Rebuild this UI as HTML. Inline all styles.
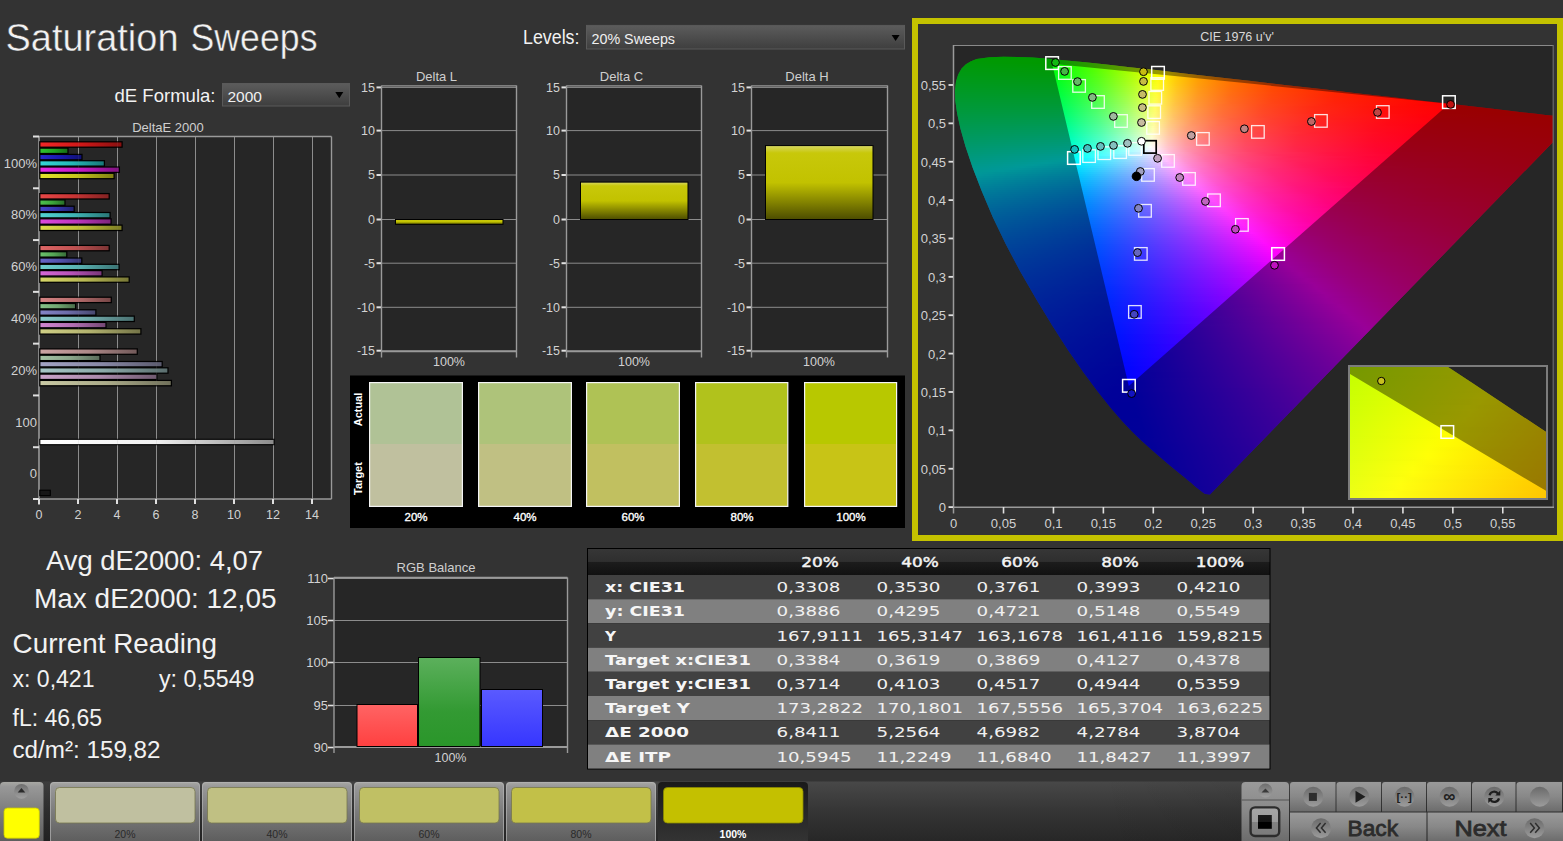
<!DOCTYPE html>
<html lang="en"><head><meta charset="utf-8"><title>Saturation Sweeps</title>
<style>
html,body{margin:0;padding:0}
body{width:1563px;height:841px;overflow:hidden;background:#333333;position:relative;font-family:"Liberation Sans",sans-serif}
.cie{position:absolute;overflow:hidden}
.cie i{display:block;height:2px}
svg{position:absolute;left:0;top:0}
svg text{font-family:"Liberation Sans",sans-serif}
svg text.dv{font-family:"DejaVu Sans","Liberation Sans",sans-serif}
</style></head>
<body>
<div style="position:absolute;left:912px;top:18px;width:639px;height:511px;border:6px solid #c4c200;background:#333"></div>
<div style="position:absolute;left:954px;top:46px;width:599px;height:461px;background:#262626"></div>
<div class="cie" style="left:954px;top:46px;width:599px;height:461px;clip-path:polygon(256.0px 448.4px,251.4px 448.1px,250.3px 447.4px,248.9px 446.5px,247.3px 445.3px,245.4px 443.7px,243.1px 441.9px,240.4px 439.7px,237.4px 437.1px,233.9px 434.2px,230.1px 431.0px,225.7px 427.5px,220.8px 423.4px,215.3px 418.9px,209.2px 413.8px,202.5px 408.1px,195.1px 401.6px,187.0px 394.2px,178.3px 385.7px,168.3px 375.2px,156.6px 361.7px,143.5px 345.2px,129.2px 326.1px,114.1px 304.2px,98.4px 279.7px,82.3px 253.2px,66.4px 225.8px,51.7px 198.1px,38.7px 170.9px,27.7px 145.1px,18.6px 121.5px,11.5px 100.5px,6.4px 82.5px,3.1px 67.3px,1.3px 54.7px,1.0px 44.2px,2.0px 35.5px,4.2px 28.4px,7.6px 22.6px,11.9px 18.3px,17.0px 15.2px,22.7px 13.1px,35.6px 11.2px,49.6px 10.8px,63.8px 10.9px,78.7px 11.6px,94.7px 12.8px,112.1px 14.4px,131.3px 16.3px,152.5px 18.6px,175.9px 21.2px,201.9px 24.1px,230.4px 27.4px,261.5px 31.0px,295.1px 34.8px,330.6px 38.9px,367.1px 43.1px,402.5px 47.2px,436.9px 51.1px,468.1px 54.7px,495.6px 57.8px,519.1px 60.5px,538.7px 62.8px,555.3px 64.7px,569.6px 66.4px,581.8px 67.8px,591.5px 68.9px,599.2px 69.7px,605.1px 70.4px,609.6px 70.9px,613.0px 71.3px,615.5px 71.6px,617.3px 71.8px,618.6px 72.0px,619.5px 72.1px,620.3px 72.2px,621.1px 72.3px,622.1px 72.4px)"><i></i><i></i><i></i><i></i><i></i><i style="background:linear-gradient(90deg,#0f0 29px,#0f0 80px,#0f0 85px)"></i><i style="background:linear-gradient(90deg,#00ff05 19px,#0f0 70px,#0f0 97px,#16ff00 109px,#18ff00 110px)"></i><i style="background:linear-gradient(90deg,#00ff09 14px,#0f0 92px,#03ff00 99px,#37ff00 126px,#3fff00 130px)"></i><i style="background:linear-gradient(90deg,#00ff0d 11px,#0f0 89px,#02ff00 99px,#54ff00 140px,#6f0 148px,#68ff00 149px)"></i><i style="background:linear-gradient(90deg,#0f1 9px,#00ff05 87px,#01ff02 99px,#53ff00 140px,#94ff00 167px)"></i><i style="background:linear-gradient(90deg,#00ff14 7px,#00ff09 85px,#02ff06 100px,#5f0 141px,#a6ff00 174px,#c1ff00 184px,#c4ff00 185px)"></i><i style="background:linear-gradient(90deg,#00ff18 5px,#00ff0d 83px,#00ff0a 98px,#32ff05 125px,#91ff00 166px,#ef0 199px,#f7ff00 202px)"></i><i style="background:linear-gradient(90deg,#00ff1b 4px,#02ff0e 101px,#57ff06 142px,#a8ff00 175px,#f8ff00 202px,#fffd00 205px,#ffd300 220px)"></i><i style="background:linear-gradient(90deg,#00ff1f 3px,#00ff12 100px,#54ff0b 141px,#a6ff04 174px,#f5ff00 201px,#fffc00 205px,#ffcb00 223px,#ffb200 235px,#ffae00 237px)"></i><i style="background:linear-gradient(90deg,#0f2 2px,#00ff16 99px,#0cff15 107px,#64ff0e 148px,#b9ff07 181px,#fcff02 203px,#fff200 208px,#ffc400 226px,#ff9300 253px,#ff9000 255px)"></i><i style="background:linear-gradient(90deg,#00ff26 2px,#00ff1a 99px,#07ff1a 105px,#5eff13 146px,#b4ff0d 179px,#f6ff08 201px,#fffb07 205px,#ffca02 223px,#ff9f00 245px,#ff7900 272px)"></i><i style="background:linear-gradient(90deg,#00ff29 1px,#00ff1f 98px,#04ff1e 104px,#5cff18 145px,#b1ff12 178px,#f3ff0d 200px,#fffe0c 204px,#ffcc06 222px,#ff9f01 244px,#ff7200 277px,#f60 289px)"></i><i style="background:linear-gradient(90deg,#00ff2d 0px,#00ff23 97px,#02ff22 103px,#59ff1d 144px,#aeff17 177px,#fffd12 204px,#ffcb0b 222px,#ff9f05 244px,#ff7100 277px,#ff5700 304px,#f50 307px)"></i><i style="background:linear-gradient(90deg,#00ff30 0px,#00ff27 97px,#03ff27 104px,#5bff21 145px,#b1ff1c 178px,#f4ff18 200px,#fffc17 204px,#ffca0f 222px,#ff9e09 244px,#ff7102 277px,#ff4c00 318px,#ff4700 324px)"></i><i style="background:linear-gradient(90deg,#00ff34 0px,#00ff2c 97px,#02ff2b 104px,#5aff26 145px,#b1ff21 178px,#f5ff1e 200px,#fffc1d 204px,#ffc914 222px,#ff9d0d 244px,#ff7005 277px,#ff4b00 318px,#ff3d00 340px,#ff3b00 342px)"></i><i style="background:linear-gradient(90deg,#00ff37 0px,#00ff30 97px,#03ff2f 105px,#5cff2b 146px,#b4ff27 179px,#f9ff23 201px,#fffb22 204px,#ffc919 222px,#ff9c11 244px,#ff6f08 277px,#ff4a01 318px,#ff3100 359px)"></i><i style="background:linear-gradient(90deg,#00ff3b 0px,#00ff34 97px,#02ff34 105px,#5cff30 146px,#b4ff2c 179px,#f9ff29 201px,#fffa28 204px,#ffc81e 222px,#ff9c15 244px,#ff6e0b 277px,#ff4a04 318px,#ff2c00 369px,#ff2900 376px)"></i><i style="background:linear-gradient(90deg,#00ff3e 0px,#00ff39 97px,#01ff38 105px,#5bff35 146px,#b4ff31 179px,#faff2f 201px,#fff62d 205px,#ffc522 223px,#ff9918 245px,#ff6d0e 278px,#ff4806 319px,#ff2500 382px,#ff2000 394px)"></i><i style="background:linear-gradient(90deg,#00ff42 0px,#00ff3d 97px,#00ff3d 105px,#5bff3a 146px,#b4ff37 179px,#fbff35 201px,#fff632 205px,#ffc427 223px,#ff981c 245px,#ff6c12 278px,#ff4809 319px,#ff2501 382px,#ff1a00 409px,#ff1a00 411px)"></i><i style="background:linear-gradient(90deg,#00ff46 0px,#00ff42 97px,#03ff41 107px,#4cff3f 140px,#a3ff3d 173px,#f8ff3b 200px,#fffc3a 203px,#ffc82d 221px,#ff9b21 243px,#ff6d15 276px,#ff480c 317px,#ff2503 380px,#ff1600 421px,#ff1300 429px)"></i><i style="background:linear-gradient(90deg,#00ff49 0px,#00ff46 97px,#02ff46 107px,#4bff44 140px,#a3ff43 173px,#f8ff41 200px,#fffb40 203px,#ffc732 221px,#ff9a25 243px,#ff6c19 276px,#ff480e 317px,#ff2405 380px,#ff0e00 443px,#ff0e00 446px)"></i><i style="background:linear-gradient(90deg,#00ff4d 0px,#00ff4b 97px,#01ff4b 107px,#4aff4a 140px,#a3ff48 173px,#f9ff47 200px,#fffa46 203px,#ffc636 221px,#ff9929 243px,#ff6c1c 276px,#ff4711 317px,#ff2407 380px,#ff0a00 458px,#ff0800 464px)"></i><i style="background:linear-gradient(90deg,#00ff51 0px,#00ff50 97px,#00ff50 107px,#4aff4f 140px,#a3ff4e 173px,#faff4d 200px,#fffa4c 203px,#ffc63b 221px,#ff982d 243px,#ff6b1f 276px,#ff4614 317px,#ff2309 380px,#ff0500 477px,#ff0400 481px)"></i><i style="background:linear-gradient(90deg,#0f5 0px,#00ff54 97px,#00ff54 107px,#49ff54 140px,#a2ff54 173px,#faff54 200px,#fff651 204px,#ffc240 222px,#ff9631 244px,#ff6922 277px,#ff4516 318px,#ff220b 381px,#ff0401 478px,#f00 496px,#f00 499px)"></i><i style="background:linear-gradient(90deg,#00ff59 0px,#00ff59 97px,#02ff59 109px,#4eff5a 142px,#a8ff5a 175px,#f0ff5a 197px,#fffc59 202px,#ffc646 220px,#ff9936 242px,#ff7129 269px,#ff4a1b 310px,#ff250e 373px,#ff0503 470px,#f00 511px,#f00 516px)"></i><i style="background:linear-gradient(90deg,#00ff5d 1px,#00ff5e 98px,#00ff5e 108px,#4bff5f 141px,#a5ff60 174px,#ffff61 201px,#ffc84d 219px,#ff993b 241px,#ff722d 268px,#ff4a1e 309px,#ff2a12 360px,#ff0d07 438px,#ff0002 501px,#f00 528px,#f00 533px)"></i><i style="background:linear-gradient(90deg,#00ff60 1px,#00ff63 98px,#02ff63 110px,#4fff65 143px,#acff66 176px,#f5ff67 198px,#fffe67 201px,#ffc752 219px,#ff9940 241px,#ff7130 268px,#ff4921 309px,#ff2a14 360px,#ff0d09 438px,#ff0003 501px,#f00 542px,#f00 550px,#f00 551px)"></i><i style="background:linear-gradient(90deg,#00ff64 1px,#00ff68 98px,#01ff69 110px,#4eff6a 143px,#acff6c 176px,#f6ff6e 198px,#fffd6e 201px,#ffc757 219px,#ff9844 241px,#ff7034 268px,#ff4824 309px,#ff2917 360px,#ff0c0b 438px,#ff0006 489px,#f00 567px,#f00 568px)"></i><i style="background:linear-gradient(90deg,#00ff68 1px,#00ff6d 98px,#00ff6e 110px,#4eff70 143px,#acff73 176px,#f6ff75 198px,#fffd74 201px,#ffc65d 219px,#ff9748 241px,#ff6f37 268px,#ff4826 309px,#ff2819 360px,#ff0c0c 438px,#ff0007 489px,#ff0001 567px,#f00 585px)"></i><i style="background:linear-gradient(90deg,#00ff6d 2px,#00ff72 99px,#02ff73 111px,#50ff76 144px,#afff79 177px,#fbff7c 199px,#fff879 202px,#ffc261 220px,#ff944c 242px,#ff6d3a 269px,#ff4629 310px,#ff2218 373px,#ff030a 470px,#ff0002 567px,#ff0001 594px,#f00 599px)"></i><i style="background:linear-gradient(90deg,#00ff71 2px,#0f7 99px,#01ff78 111px,#4fff7c 144px,#afff80 177px,#fbff83 199px,#fff880 202px,#ffc166 220px,#ff9351 242px,#ff6c3e 269px,#ff452c 310px,#ff211b 373px,#ff020c 470px,#ff0002 591px,#ff0002 599px)"></i><i style="background:linear-gradient(90deg,#00ff75 3px,#00ff7d 100px,#02ff7e 112px,#51ff82 145px,#9fff86 172px,#fcff8a 199px,#fff083 204px,#ffbc69 222px,#ff8f53 244px,#ff623d 277px,#ff3f2c 318px,#ff1d1b 381px,#ff000d 478px,#ff0003 599px)"></i><i style="background:linear-gradient(90deg,#00ff79 3px,#00ff82 100px,#01ff83 112px,#51ff88 145px,#9fff8c 172px,#fdff92 199px,#ffc875 217px,#ff975c 239px,#ff6e47 266px,#ff4633 307px,#ff2722 358px,#ff0a14 436px,#ff000d 487px,#ff0005 584px,#ff0004 599px)"></i><i style="background:linear-gradient(90deg,#00ff7d 3px,#00ff87 100px,#00ff89 112px,#50ff8e 145px,#9fff93 172px,#fdff99 199px,#ffc77b 217px,#ff9661 239px,#ff6e4b 266px,#ff4535 307px,#ff2625 358px,#ff0915 436px,#ff000f 487px,#ff0006 584px,#ff0005 599px)"></i><i style="background:linear-gradient(90deg,#00ff82 4px,#00ff8d 101px,#01ff8f 113px,#52ff95 146px,#a2ff9a 173px,#efffa0 195px,#fffc9f 200px,#ffcb84 215px,#ff9968 237px,#ff6f50 264px,#ff4639 305px,#ff2628 356px,#ff0917 434px,#ff0012 475px,#ff0006 596px,#ff0006 599px)"></i><i style="background:linear-gradient(90deg,#00ff86 4px,#00ff93 101px,#00ff95 113px,#52ff9b 146px,#a2ffa1 173px,#efffa7 195px,#ffffa8 199px,#ffcd8b 214px,#ffa272 232px,#ff7558 259px,#ff5043 292px,#ff2c2e 343px,#ff0d1b 421px,#ff0013 472px,#ff0008 593px,#ff0007 599px)"></i><i style="background:linear-gradient(90deg,#00ff8a 5px,#00ff98 102px,#01ff9b 114px,#54ffa2 147px,#a5ffa9 174px,#f4ffaf 196px,#ffffb0 199px,#ffcc92 214px,#ffa177 232px,#ff745c 259px,#ff4f46 292px,#ff2c30 343px,#ff0c1d 421px,#ff0015 472px,#ff0009 593px,#ff0008 599px)"></i><i style="background:linear-gradient(90deg,#00ff8f 5px,#00ff9e 102px,#00ffa0 114px,#53ffa8 147px,#a5ffb0 174px,#f4ffb7 196px,#fffeb7 199px,#ffcc98 214px,#ffa07c 232px,#ff7360 259px,#ff4f49 292px,#ff2b33 343px,#ff0b1f 421px,#ff0017 472px,#ff000a 593px,#ff0009 599px)"></i><i style="background:linear-gradient(90deg,#00ff93 6px,#00ffa4 103px,#01ffa7 115px,#55ffaf 148px,#a9ffb7 175px,#f9ffc0 197px,#fff9bc 200px,#ffc89c 215px,#ff957b 237px,#ff6c60 264px,#ff4345 305px,#ff2431 356px,#ff071e 434px,#ff0018 475px,#ff000b 596px,#ff000b 599px)"></i><i style="background:linear-gradient(90deg,#00ff98 6px,#0fa 103px,#00ffad 115px,#55ffb6 148px,#a9ffbf 175px,#faffc8 197px,#fff8c4 200px,#ffc7a2 215px,#ff9c85 233px,#ff7067 260px,#ff4c4f 293px,#ff2937 344px,#ff0a22 422px,#ff001b 463px,#ff000d 584px,#ff000c 599px)"></i><i style="background:linear-gradient(90deg,#00ff9d 7px,#00ffb0 104px,#01ffb3 116px,#57ffbd 149px,#acffc7 176px,#feffd0 198px,#ffccad 213px,#ff9f8d 231px,#ff726d 258px,#ff4d54 291px,#ff293b 342px,#ff0a25 420px,#ff001d 461px,#ff000e 582px,#ff000d 597px,#ff000d 599px)"></i><i style="background:linear-gradient(90deg,#00ffa1 8px,#00ffb6 105px,#02ffba 117px,#59ffc4 150px,#b0ffcf 177px,#f3ffd7 195px,#ffffd9 198px,#ffcbb3 213px,#ff9e93 231px,#ff7172 258px,#ff4c57 291px,#ff293d 342px,#ff0926 420px,#ff001f 461px,#ff0010 582px,#ff000e 597px,#ff000e 599px)"></i><i style="background:linear-gradient(90deg,#00ffa6 8px,#00ffbc 105px,#01ffc0 117px,#59ffcc 150px,#b0ffd7 177px,#f4ffe0 195px,#fffee1 198px,#ffcaba 213px,#ff9d98 231px,#ff7076 258px,#ff4b5a 291px,#ff2840 342px,#ff0928 420px,#ff0020 461px,#f01 582px,#ff000f 597px,#ff000f 599px)"></i><i style="background:linear-gradient(90deg,#00ffab 9px,#00ffc3 106px,#03ffc7 118px,#5bffd3 151px,#b3ffe0 178px,#f8ffe9 196px,#fff9e6 199px,#ffc6be 214px,#ff9a9c 232px,#ff6e79 259px,#ff4a5d 292px,#ff2742 343px,#ff082a 421px,#f02 462px,#ff0012 583px,#ff0010 598px,#ff0010 599px)"></i><i style="background:linear-gradient(90deg,#00ffb0 9px,#00ffc9 106px,#01ffcd 118px,#5affdb 151px,#b3ffe8 178px,#f9fff2 196px,#fff8ee 199px,#ffc5c4 214px,#ff99a1 232px,#ff6d7d 259px,#ff4960 292px,#ff2644 343px,#ff072c 421px,#ff0023 462px,#ff0013 583px,#ff0012 598px,#f01 599px)"></i><i style="background:linear-gradient(90deg,#00ffb5 10px,#00ffd0 107px,#03ffd4 119px,#5dffe3 152px,#b7fff1 179px,#fefffc 197px,#ffcad0 212px,#ff9daa 230px,#ff6e84 257px,#ff4a65 290px,#ff2648 341px,#ff072e 419px,#ff0025 460px,#ff0014 581px,#ff0013 596px,#ff0013 597px)"></i><i style="background:linear-gradient(90deg,#00ffba 10px,#00ffd6 107px,#02ffdb 119px,#5cffea 152px,#b7fff9 179px,#effbff 194px,#fff7fe 199px,#ffc3d2 214px,#ff97ac 232px,#ff6b86 259px,#ff4767 292px,#ff244a 343px,#ff0630 421px,#ff0028 454px,#ff0016 575px,#ff0014 593px,#ff0014 595px)"></i><i style="background:linear-gradient(90deg,#00ffbf 11px,#0fd 108px,#03ffe2 120px,#5ffff2 153px,#a8ffff 175px,#f1f0ff 197px,#fef 201px,#ffbdd4 216px,#ff92ae 234px,#ff6788 261px,#ff4469 294px,#ff234b 345px,#ff0531 423px,#ff0029 456px,#ff0017 577px,#ff0016 592px,#ff0016 593px)"></i><i style="background:linear-gradient(90deg,#00ffc4 12px,#00ffe4 109px,#00ffe9 119px,#49fff6 146px,#81fdff 164px,#eae8ff 197px,#ffe2fd 204px,#ffb4d3 219px,#ff84a8 241px,#ff5e84 268px,#ff3862 309px,#ff1643 372px,#ff0130 435px,#ff0017 586px,#ff0017 591px)"></i><i style="background:linear-gradient(90deg,#00ffca 13px,#00ffec 110px,#01fff0 120px,#4bffff 147px,#e6e0ff 198px,#ffdafe 206px,#ffa6ce 224px,#ff7ba5 246px,#ff517d 279px,#ff2f5e 320px,#ff1141 383px,#ff002f 446px,#ff001b 567px,#ff0018 589px)"></i><i style="background:linear-gradient(90deg,#00ffcf 13px,#00fff3 110px,#00fff8 120px,#2ffdff 138px,#c3deff 189px,#fbd2ff 207px,#ffc5f3 212px,#ff98c7 230px,#ff71a1 252px,#ff4a7b 285px,#ff2558 336px,#ff0639 414px,#ff0031 447px,#ff001c 568px,#ff001a 586px,#ff001a 587px)"></i><i style="background:linear-gradient(90deg,#00ffd4 14px,#00fff1 92px,#00fffe 119px,#06fdff 123px,#91e0ff 174px,#f4cbff 207px,#ffc7fd 211px,#ff99cf 229px,#ff71a7 251px,#ff4a80 284px,#ff2b61 325px,#ff0e43 388px,#ff0034 439px,#ff001e 560px,#ff001c 582px,#ff001b 585px)"></i><i style="background:linear-gradient(90deg,#00ffda 15px,#00fff8 93px,#00fdff 111px,#00f7ff 121px,#87daff 172px,#ffc0ff 213px,#ff93d0 231px,#ff6da9 253px,#ff4782 286px,#ff235d 337px,#ff043d 415px,#ff0034 448px,#ff001e 569px,#ff001d 581px,#ff001d 583px)"></i><i style="background:linear-gradient(90deg,#00ffdf 15px,#0ff 93px,#00f1ff 120px,#06efff 124px,#8bd2ff 175px,#ffb7fd 216px,#ff8cd0 234px,#ff61a2 261px,#ff3f7e 294px,#ff1e5b 345px,#ff013c 423px,#ff0023 544px,#ff001f 577px,#ff001e 581px)"></i><i style="background:linear-gradient(90deg,#00ffe5 16px,#0ff 79px,#00eaff 120px,#04e8ff 124px,#87ccff 175px,#fab2ff 216px,#ffabf8 220px,#ff84cd 238px,#ff5ba1 265px,#ff3b7e 298px,#ff1b5b 349px,#ff003d 427px,#ff0024 548px,#ff0020 575px,#ff0020 579px)"></i><i style="background:linear-gradient(90deg,#00ffeb 17px,#00feff 68px,#00e5ff 119px,#03e2ff 124px,#83c6ff 175px,#f4acff 216px,#ffa7fc 221px,#ff81d1 239px,#ff59a4 266px,#ff3980 299px,#ff1a5d 350px,#ff0343 413px,#ff002f 491px,#f02 569px,#ff0021 577px)"></i><i style="background:linear-gradient(90deg,#00fff0 17px,#00fcff 58px,#0df 121px,#04dbff 125px,#a1b8ff 188px,#fba4ff 221px,#ff9af5 226px,#ff71c5 248px,#ff4e9d 275px,#ff2c76 316px,#ff1257 367px,#ff0144 418px,#ff0028 539px,#ff0023 572px,#ff0023 575px)"></i><i style="background:linear-gradient(90deg,#00fff6 18px,#00fcff 45px,#00d7ff 123px,#79bbff 174px,#ff9bfe 225px,#ff71cc 247px,#ff4ea2 274px,#ff2c7a 315px,#ff125a 366px,#ff0146 417px,#ff0029 538px,#ff0024 571px,#ff0024 573px)"></i><i style="background:linear-gradient(90deg,#00fffc 19px,#00ebff 70px,#00d2ff 121px,#02d0ff 125px,#98adff 188px,#ef99ff 221px,#ff93fc 228px,#ff6bcb 250px,#ff4aa3 277px,#ff297b 318px,#ff105b 369px,#ff0047 420px,#ff002a 541px,#ff0026 568px,#ff0026 571px)"></i><i style="background:linear-gradient(90deg,#00fbff 20px,#00cfff 117px,#01caff 125px,#94a8ff 188px,#fe90ff 229px,#ff69cf 251px,#ff48a6 278px,#ff287d 319px,#ff0f5d 370px,#ff0048 421px,#ff002b 542px,#ff0027 569px)"></i><i style="background:linear-gradient(90deg,#00f6ff 20px,#00c9ff 117px,#00c5ff 125px,#90a3ff 188px,#f88bff 229px,#ff87fc 233px,#ff62cc 255px,#ff43a5 282px,#ff257d 323px,#ff0c5e 374px,#ff004d 415px,#ff0032 512px,#ff0029 563px,#ff0029 567px)"></i><i style="background:linear-gradient(90deg,#00f0ff 21px,#00c4ff 118px,#01c0ff 126px,#8f9eff 189px,#f486ff 230px,#ff82fd 235px,#ff5ece 257px,#ff40a6 284px,#ff237e 325px,#ff0b5f 376px,#ff004e 417px,#ff0034 514px,#ff002a 565px,#ff002a 566px)"></i><i style="background:linear-gradient(90deg,#00eaff 22px,#00beff 119px,#02baff 127px,#8d99ff 190px,#f181ff 231px,#ff7dfe 237px,#ff5bcf 259px,#ff3ea8 286px,#ff2180 327px,#ff0a60 378px,#ff0052 411px,#ff0036 508px,#ff002d 559px,#ff002c 564px)"></i><i style="background:linear-gradient(90deg,#00e5ff 23px,#00b9ff 120px,#03b5ff 128px,#8c94ff 191px,#ee7cff 232px,#ff76fc 240px,#ff56cf 262px,#ff35a1 295px,#ff1b7c 336px,#ff0259 399px,#ff003a 496px,#ff002e 559px,#ff002d 562px)"></i><i style="background:linear-gradient(90deg,#00e0ff 23px,#00b5ff 120px,#02b1ff 128px,#8990ff 191px,#ff72fd 242px,#ff52d0 264px,#ff33a2 297px,#ff197d 338px,#ff015a 401px,#ff003c 498px,#ff0031 549px,#ff002f 559px,#ff002f 560px)"></i><i style="background:linear-gradient(90deg,#00dbff 24px,#00b0ff 121px,#03acff 129px,#878bff 192px,#fe6eff 243px,#ff4acb 270px,#ff2d9f 303px,#ff157c 344px,#ff005a 407px,#ff003c 504px,#ff0031 555px,#ff0031 558px)"></i><i style="background:linear-gradient(90deg,#00d6ff 25px,#00abff 122px,#02a8ff 129px,#8487ff 192px,#f86bff 243px,#ff67fc 247px,#ff4bd1 269px,#ff2da4 302px,#ff1580 343px,#ff0162 394px,#ff0045 472px,#ff0034 550px,#ff0032 556px)"></i><i style="background:linear-gradient(90deg,#00d1ff 26px,#00a6ff 123px,#03a3ff 130px,#8383ff 193px,#f567ff 244px,#ff63fd 249px,#ff47d2 271px,#ff2ba5 304px,#ff1381 345px,#ff0063 396px,#ff0047 474px,#ff0034 552px,#ff0034 554px)"></i><i style="background:linear-gradient(90deg,#0cf 27px,#00a2ff 124px,#029fff 130px,#807fff 193px,#f063ff 244px,#ff5efc 252px,#ff3eca 279px,#ff24a0 312px,#ff0f7e 353px,#f06 394px,#ff0049 472px,#ff0036 550px,#ff0036 552px)"></i><i style="background:linear-gradient(90deg,#00c8ff 27px,#009eff 124px,#039bff 131px,#9e74ff 209px,#f85dff 250px,#ff5afd 254px,#ff3bcb 281px,#ff22a2 314px,#ff0979 365px,#ff0067 398px,#ff0049 476px,#ff003a 539px,#ff0038 549px,#ff0038 550px)"></i><i style="background:linear-gradient(90deg,#00c4ff 28px,#009aff 125px,#0297ff 131px,#9b70ff 209px,#f35aff 250px,#ff56fe 256px,#ff38cc 283px,#ff20a3 316px,#ff087a 367px,#ff0068 400px,#ff004a 478px,#ff003b 541px,#ff0039 548px)"></i><i style="background:linear-gradient(90deg,#00bfff 29px,#0096ff 126px,#0393ff 132px,#996cff 210px,#f056ff 251px,#ff51fc 259px,#ff35cc 286px,#ff1da3 319px,#ff067b 370px,#ff006c 397px,#ff004d 475px,#ff003d 538px,#ff003b 546px)"></i><i style="background:linear-gradient(90deg,#0bf 30px,#0092ff 127px,#048fff 133px,#9869ff 211px,#ed53ff 252px,#ff4eff 260px,#ff33ce 287px,#ff1ca6 320px,#ff057d 371px,#ff006d 398px,#ff004e 476px,#ff003e 539px,#ff003d 544px)"></i><i style="background:linear-gradient(90deg,#00b7ff 31px,#008eff 128px,#058bff 134px,#9765ff 212px,#ff4afe 263px,#ff2fce 290px,#ff19a6 323px,#ff037d 374px,#ff005e 437px,#ff0041 534px,#ff003f 542px)"></i><i style="background:linear-gradient(90deg,#00b3ff 32px,#008aff 129px,#0687ff 135px,#9562ff 213px,#fd47ff 264px,#ff29c8 297px,#ff15a2 330px,#ff007b 381px,#ff0057 459px,#ff0041 537px,#ff0041 540px)"></i><i style="background:linear-gradient(90deg,#00afff 33px,#0087ff 130px,#0a83ff 138px,#985eff 216px,#ff43ff 267px,#ff2ad0 294px,#ff15a8 327px,#ff0080 378px,#ff0060 441px,#ff0042 538px)"></i><i style="background:linear-gradient(90deg,#00abff 33px,#0083ff 130px,#0681ff 136px,#915cff 214px,#f641ff 265px,#ff3dfc 271px,#ff26ce 298px,#ff12a7 331px,#ff0080 382px,#ff0060 445px,#ff0048 523px,#ff0045 535px,#f04 536px)"></i><i style="background:linear-gradient(90deg,#00a8ff 34px,#0080ff 131px,#0a7cff 139px,#9458ff 217px,#f73eff 268px,#ff3afd 273px,#ff24cf 300px,#ff10a9 333px,#ff0087 374px,#f06 437px,#ff0046 534px)"></i><i style="background:linear-gradient(90deg,#00a4ff 35px,#007dff 132px,#2a71ff 159px,#b64bff 237px,#f63aff 270px,#ff36fc 276px,#ff21cf 303px,#ff0aa1 344px,#f08 377px,#f06 440px,#ff004c 518px,#ff0049 530px,#ff0048 532px)"></i><i style="background:linear-gradient(90deg,#00a1ff 36px,#0079ff 133px,#685dff 196px,#fa36ff 274px,#ff32fa 279px,#ff1ecf 306px,#ff08a2 347px,#ff008c 374px,#ff0069 437px,#ff004e 515px,#ff004a 530px)"></i><i style="background:linear-gradient(90deg,#009dff 37px,#0076ff 134px,#8253ff 212px,#f733ff 275px,#ff30fd 280px,#ff1cd1 307px,#ff07a4 348px,#ff008e 375px,#ff006b 438px,#ff004f 516px,#ff004c 528px,#ff004c 529px)"></i><i style="background:linear-gradient(90deg,#009aff 38px,#0073ff 135px,#8150ff 213px,#f531ff 276px,#ff2dfc 283px,#ff19d1 310px,#ff05a4 351px,#ff008f 378px,#ff006c 441px,#ff0050 519px,#ff004e 527px)"></i><i style="background:linear-gradient(90deg,#0096ff 39px,#0170ff 136px,#814dff 214px,#f22eff 277px,#ff2afd 285px,#ff17d2 312px,#ff03a5 353px,#ff008c 386px,#ff006a 449px,#ff0054 512px,#ff0050 524px,#ff0050 525px)"></i><i style="background:linear-gradient(90deg,#0093ff 40px,#026dff 137px,#804bff 215px,#f02cff 278px,#ff28ff 286px,#ff12cc 319px,#ff00a2 360px,#ff007f 411px,#ff005d 489px,#ff0052 522px,#ff0052 523px)"></i><i style="background:linear-gradient(90deg,#0090ff 41px,#026aff 138px,#7f48ff 216px,#ee2aff 279px,#ff24fe 289px,#ff10cc 322px,#ff00a2 363px,#ff007f 414px,#ff005d 492px,#f05 519px,#ff0054 521px)"></i><i style="background:linear-gradient(90deg,#008dff 42px,#006fff 120px,#0268ff 138px,#9c3dff 235px,#f624ff 286px,#ff21fd 292px,#ff0dcc 325px,#ff00a9 358px,#ff0084 409px,#ff0061 487px,#ff0058 514px,#ff0056 519px)"></i><i style="background:linear-gradient(90deg,#008aff 42px,#0265ff 139px,#9b3bff 236px,#f422ff 287px,#ff1ffd 294px,#ff0bcd 327px,#f0a 360px,#ff0085 411px,#ff0062 489px,#ff0059 516px,#ff0058 517px)"></i><i style="background:linear-gradient(90deg,#0087ff 43px,#006aff 121px,#0263ff 139px,#9939ff 236px,#f021ff 287px,#ff1bfc 297px,#ff09cc 330px,#ff00b0 357px,#ff0089 408px,#ff0064 486px,#ff005b 513px,#ff005b 515px)"></i><i style="background:linear-gradient(90deg,#0084ff 44px,#0067ff 122px,#0260ff 140px,#9737ff 237px,#ee1fff 288px,#ff1aff 298px,#ff07ce 331px,#ff00b6 353px,#ff008e 404px,#ff0068 482px,#ff005e 509px,#ff005d 513px)"></i><i style="background:linear-gradient(90deg,#0082ff 45px,#0064ff 123px,#005fff 138px,#733eff 216px,#f41aff 294px,#ff16fc 302px,#ff05cd 335px,#ff00b5 357px,#ff008e 408px,#ff0068 486px,#ff0060 508px,#ff005f 511px)"></i><i style="background:linear-gradient(90deg,#007fff 46px,#0062ff 124px,#005cff 139px,#9133ff 236px,#f916ff 299px,#ff13fb 305px,#ff02cd 338px,#ff00a5 379px,#ff007d 442px,#ff0063 505px,#ff0061 509px)"></i><i style="background:linear-gradient(90deg,#007cff 47px,#005fff 125px,#005aff 140px,#9031ff 237px,#f714ff 300px,#ff11fc 307px,#ff01ce 340px,#ff00a6 381px,#ff007e 444px,#ff0064 507px)"></i><i style="background:linear-gradient(90deg,#0079ff 48px,#005dff 126px,#0157ff 141px,#8f2fff 238px,#f413ff 301px,#ff0ffc 309px,#ff00ce 342px,#ff00a7 383px,#ff007f 446px,#ff0069 497px,#f06 505px)"></i><i style="background:linear-gradient(90deg,#07f 49px,#005bff 127px,#0255ff 142px,#8e2dff 239px,#f211ff 302px,#ff0dfe 310px,#ff00d0 343px,#ff00a9 384px,#ff0080 447px,#ff006a 498px,#ff0068 503px)"></i><i style="background:linear-gradient(90deg,#0074ff 50px,#0058ff 128px,#0252ff 143px,#8d2bff 240px,#f00fff 303px,#ff0afd 313px,#ff00d7 340px,#ff00ae 381px,#ff0084 444px,#ff006d 495px,#ff006b 501px)"></i><i style="background:linear-gradient(90deg,#0072ff 51px,#0056ff 129px,#0350ff 144px,#8c29ff 241px,#ee0dff 304px,#ff08fc 316px,#f0d 338px,#ff00b2 379px,#ff008e 430px,#ff006f 493px,#ff006d 499px)"></i><i style="background:linear-gradient(90deg,#006fff 52px,#0054ff 130px,#004fff 142px,#8729ff 239px,#ff06ff 317px,#ff00df 339px,#ff00b4 380px,#ff008f 431px,#ff0071 494px,#ff0070 497px)"></i><i style="background:linear-gradient(90deg,#006dff 53px,#0051ff 131px,#004dff 143px,#8627ff 240px,#fd05ff 318px,#ff00e6 336px,#ff00b9 377px,#ff0093 428px,#ff0074 491px,#ff0072 495px)"></i><i style="background:linear-gradient(90deg,#006bff 54px,#004fff 132px,#014bff 144px,#8525ff 241px,#fb03ff 319px,#ff00f7 327px,#ff00cd 360px,#ff00a1 411px,#ff007d 474px,#ff0075 492px,#ff0075 493px)"></i><i style="background:linear-gradient(90deg,#0068ff 55px,#004dff 133px,#0249ff 145px,#8523ff 242px,#f902ff 320px,#ff00fc 326px,#ff00d1 359px,#ff00a4 410px,#ff007f 473px,#f07 491px,#f07 492px)"></i><i style="background:linear-gradient(90deg,#06f 57px,#004bff 135px,#0147ff 145px,#8322ff 242px,#f501ff 320px,#ff00fc 328px,#ff00d2 361px,#ff00a5 412px,#ff0080 475px,#ff0079 490px)"></i><i style="background:linear-gradient(90deg,#0063ff 58px,#0049ff 136px,#0245ff 146px,#8220ff 243px,#f300ff 321px,#ff00fe 329px,#ff00d4 362px,#ff00a6 413px,#ff0081 476px,#ff007c 488px)"></i><i style="background:linear-gradient(90deg,#0061ff 59px,#0047ff 137px,#0243ff 147px,#811eff 244px,#f200ff 322px,#ff00fd 332px,#ff00d3 365px,#ff00a6 416px,#ff0082 479px,#ff007f 486px)"></i><i style="background:linear-gradient(90deg,#005fff 60px,#0045ff 138px,#0341ff 148px,#811dff 245px,#da03ff 308px,#ff00fc 335px,#ff00cb 376px,#ff00a1 427px,#ff0084 478px,#ff0081 484px)"></i><i style="background:linear-gradient(90deg,#005dff 61px,#0043ff 139px,#0140ff 147px,#7d1cff 244px,#d502ff 307px,#fd00ff 334px,#ff00c5 385px,#ff009d 436px,#ff0086 477px,#ff0084 482px)"></i><i style="background:linear-gradient(90deg,#005bff 62px,#0041ff 140px,#023eff 148px,#9d11ff 269px,#d600ff 310px,#fe00ff 337px,#ff00ce 378px,#ff00a4 429px,#ff0087 480px)"></i><i style="background:linear-gradient(90deg,#0059ff 63px,#003fff 141px,#023cff 149px,#9c0fff 270px,#d500ff 311px,#fc00ff 338px,#ff00f4 348px,#ff00c6 389px,#ff009f 440px,#ff008c 473px,#ff008a 478px)"></i><i style="background:linear-gradient(90deg,#0057ff 64px,#003dff 142px,#033aff 150px,#9b0eff 271px,#d300ff 312px,#fa00ff 339px,#ff00fa 346px,#ff00cb 387px,#ff00a2 438px,#ff008f 471px,#ff008c 476px)"></i><i style="background:linear-gradient(90deg,#05f 65px,#003bff 143px,#0439ff 151px,#9a0cff 272px,#c700ff 305px,#ff00fe 346px,#ff00cd 387px,#ff00a5 438px,#ff0091 471px,#ff008f 474px)"></i><i style="background:linear-gradient(90deg,#0053ff 66px,#003aff 144px,#0437ff 152px,#990bff 273px,#c500ff 306px,#fe00ff 347px,#ff00cf 388px,#ff00a6 439px,#ff0092 472px)"></i><i style="background:linear-gradient(90deg,#0051ff 67px,#0038ff 145px,#0535ff 153px,#990aff 274px,#c400ff 307px,#fc00ff 348px,#ff00c7 399px,#ff00a1 450px,#ff0096 468px,#ff0095 470px)"></i><i style="background:linear-gradient(90deg,#004fff 69px,#0036ff 147px,#2d28ff 188px,#a504ff 285px,#c800ff 312px,#ff00fe 353px,#ff00cf 394px,#ff00a6 445px,#f09 467px,#ff0098 468px)"></i><i style="background:linear-gradient(90deg,#004dff 70px,#0034ff 148px,#5919ff 226px,#a802ff 289px,#fc00ff 352px,#ff00f5 362px,#ff00c9 403px,#ff00a3 454px,#ff009b 466px)"></i><i style="background:linear-gradient(90deg,#004cff 71px,#03f 149px,#7011ff 246px,#b000ff 297px,#f300ff 348px,#ff00fd 358px,#ff00cf 399px,#ff00a7 450px,#ff00a0 462px,#ff009f 464px)"></i><i style="background:linear-gradient(90deg,#004aff 72px,#0031ff 150px,#8d07ff 271px,#af00ff 298px,#ff00fd 361px,#ff00cf 402px,#ff00a7 453px,#ff00a2 461px,#ff00a2 462px)"></i><i style="background:linear-gradient(90deg,#0048ff 73px,#002fff 151px,#8c06ff 272px,#ae00ff 299px,#ff00fe 362px,#ff00d1 403px,#ff00a9 454px,#ff00a5 460px)"></i><i style="background:linear-gradient(90deg,#0046ff 74px,#002eff 152px,#8b04ff 273px,#ad00ff 300px,#fe00ff 363px,#ff00c9 414px,#f0a 455px,#ff00a8 458px)"></i><i style="background:linear-gradient(90deg,#0045ff 75px,#012cff 153px,#8b03ff 274px,#bd00ff 315px,#f0f 366px,#ff00d2 407px,#ff00b1 448px,#ff00ac 456px)"></i><i style="background:linear-gradient(90deg,#0043ff 77px,#032bff 155px,#8b02ff 276px,#ec00ff 354px,#f0f 369px,#ff00d2 410px,#ff00b1 451px,#ff00ae 455px)"></i><i style="background:linear-gradient(90deg,#0041ff 78px,#002eff 141px,#0329ff 156px,#8b00ff 277px,#ea00ff 355px,#ff00fd 373px,#ff00d1 414px,#ff00b6 447px,#ff00b2 453px)"></i><i style="background:linear-gradient(90deg,#0040ff 79px,#002cff 142px,#0029ff 154px,#8600ff 275px,#fd00ff 372px,#ff00cb 423px,#ff00b6 450px,#ff00b5 451px)"></i><i style="background:linear-gradient(90deg,#003eff 80px,#002bff 143px,#0127ff 155px,#8600ff 276px,#fb00ff 373px,#ff00f6 383px,#ff00cd 424px,#f0b 446px,#ff00b9 449px)"></i><i style="background:linear-gradient(90deg,#003cff 81px,#002aff 144px,#0126ff 156px,#8500ff 277px,#fa00ff 374px,#ff00fa 382px,#ff00d0 423px,#ff00be 445px,#ff00bc 447px)"></i><i style="background:linear-gradient(90deg,#003bff 82px,#0028ff 145px,#0224ff 157px,#6a05ff 254px,#80f 281px,#fc00ff 378px,#ff00f4 390px,#ff00c3 441px,#ff00c0 445px)"></i><i style="background:linear-gradient(90deg,#0039ff 84px,#0026ff 147px,#0423ff 159px,#6a04ff 256px,#8f00ff 289px,#eb00ff 367px,#ff00fc 385px,#ff00d2 426px,#ff00c5 441px,#ff00c4 443px)"></i><i style="background:linear-gradient(90deg,#0038ff 85px,#0025ff 148px,#0222ff 158px,#6803ff 255px,#9500ff 296px,#f100ff 374px,#ff00fe 386px,#ff00d3 427px,#ff00c9 439px,#ff00c8 441px)"></i><i style="background:linear-gradient(90deg,#0036ff 86px,#0024ff 149px,#0321ff 159px,#6702ff 256px,#f200ff 377px,#ff00fd 389px,#ff00d3 430px,#f0c 438px,#f0c 439px)"></i><i style="background:linear-gradient(90deg,#0035ff 87px,#02f 150px,#031fff 160px,#6701ff 257px,#f100ff 378px,#f0f 390px,#ff00d5 431px,#ff00d0 437px)"></i><i style="background:linear-gradient(90deg,#03f 89px,#0021ff 152px,#051eff 162px,#6800ff 259px,#f000ff 380px,#f0f 392px,#ff00d5 433px,#ff00d4 435px)"></i><i style="background:linear-gradient(90deg,#0032ff 90px,#0020ff 153px,#051dff 163px,#6800ff 260px,#ef00ff 381px,#ff00fd 396px,#ff00db 429px,#ff00d8 433px)"></i><i style="background:linear-gradient(90deg,#0030ff 91px,#001eff 154px,#071bff 166px,#5603ff 244px,#90f 307px,#f100ff 385px,#f0f 397px,#f0d 430px,#ff00dc 431px)"></i><i style="background:linear-gradient(90deg,#002fff 92px,#001dff 155px,#081aff 167px,#5502ff 245px,#d800ff 366px,#f0f 399px,#ff00e3 426px,#ff00e0 429px)"></i><i style="background:linear-gradient(90deg,#002eff 93px,#001cff 156px,#0e17ff 174px,#5b00ff 252px,#ff00fe 403px,#ff00e6 425px,#ff00e4 427px)"></i><i style="background:linear-gradient(90deg,#002cff 95px,#001aff 158px,#5d00ff 255px,#ff00fd 406px,#ff00ea 424px,#ff00e9 425px)"></i><i style="background:linear-gradient(90deg,#002bff 96px,#0019ff 159px,#4a02ff 237px,#c900ff 358px,#f600ff 399px,#ff00fc 409px,#ff00ef 421px,#ff00ed 423px)"></i><i style="background:linear-gradient(90deg,#002aff 97px,#0018ff 160px,#4a01ff 238px,#e900ff 389px,#ff00fd 411px,#ff00f2 421px)"></i><i style="background:linear-gradient(90deg,#0029ff 98px,#0017ff 161px,#4a00ff 239px,#e700ff 390px,#ff00fe 412px,#ff00f6 419px)"></i><i style="background:linear-gradient(90deg,#0027ff 100px,#0116ff 163px,#4b00ff 241px,#e700ff 392px,#f0f 414px,#ff00fa 418px)"></i><i style="background:linear-gradient(90deg,#0026ff 101px,#0215ff 164px,#4b00ff 242px,#e600ff 393px,#fe00ff 415px,#f0f 416px)"></i><i style="background:linear-gradient(90deg,#0025ff 102px,#0213ff 165px,#3c01ff 228px,#d400ff 379px,#f800ff 412px,#fa00ff 414px)"></i><i style="background:linear-gradient(90deg,#0023ff 103px,#0312ff 166px,#3c00ff 229px,#d300ff 380px,#f000ff 407px,#f600ff 412px)"></i><i style="background:linear-gradient(90deg,#02f 105px,#0014ff 156px,#0411ff 168px,#3d00ff 231px,#d300ff 382px,#f000ff 409px,#f100ff 410px)"></i><i style="background:linear-gradient(90deg,#0021ff 106px,#0013ff 157px,#0311ff 167px,#3c00ff 230px,#d000ff 381px,#ec00ff 408px)"></i><i style="background:linear-gradient(90deg,#0020ff 107px,#0012ff 158px,#050fff 170px,#3d00ff 233px,#d100ff 384px,#e800ff 406px)"></i><i style="background:linear-gradient(90deg,#001eff 109px,#01f 160px,#040eff 170px,#3200ff 221px,#c300ff 372px,#de00ff 399px,#e300ff 404px)"></i><i style="background:linear-gradient(90deg,#001dff 110px,#0010ff 161px,#060dff 173px,#3400ff 224px,#c400ff 375px,#df00ff 402px)"></i><i style="background:linear-gradient(90deg,#001cff 111px,#000fff 162px,#070cff 174px,#3400ff 225px,#c300ff 376px,#d900ff 398px,#db00ff 400px)"></i><i style="background:linear-gradient(90deg,#001bff 112px,#000eff 163px,#1008ff 185px,#3400ff 226px,#c200ff 377px,#d400ff 395px,#d700ff 398px)"></i><i style="background:linear-gradient(90deg,#001aff 114px,#000dff 165px,#2a00ff 216px,#b600ff 367px,#d100ff 394px,#d300ff 396px)"></i><i style="background:linear-gradient(90deg,#0019ff 115px,#000cff 166px,#2a00ff 217px,#b500ff 368px,#cb00ff 390px,#cf00ff 394px)"></i><i style="background:linear-gradient(90deg,#0018ff 117px,#000bff 168px,#2b00ff 219px,#b500ff 370px,#cb00ff 392px)"></i><i style="background:linear-gradient(90deg,#0017ff 118px,#010aff 169px,#2300ff 210px,#ab00ff 361px,#c500ff 388px,#c700ff 390px)"></i><i style="background:linear-gradient(90deg,#0016ff 119px,#0109ff 170px,#2300ff 211px,#a0f 362px,#bf00ff 384px,#c300ff 388px)"></i><i style="background:linear-gradient(90deg,#0014ff 121px,#0207ff 172px,#2400ff 213px,#a0f 364px,#bf00ff 386px)"></i><i style="background:linear-gradient(90deg,#0013ff 122px,#0307ff 173px,#2400ff 214px,#a0f 365px,#b0f 383px,#b0f 384px)"></i><i style="background:linear-gradient(90deg,#0012ff 124px,#0008ff 165px,#0505ff 177px,#2000ff 210px,#a400ff 361px,#b500ff 379px,#b800ff 382px)"></i><i style="background:linear-gradient(90deg,#01f 125px,#0007ff 166px,#0604ff 178px,#2700ff 219px,#ab00ff 370px,#b400ff 380px,#b500ff 381px)"></i><i style="background:linear-gradient(90deg,#0010ff 126px,#0006ff 167px,#0b02ff 185px,#8b00ff 336px,#b000ff 377px,#b200ff 379px)"></i><i style="background:linear-gradient(90deg,#000fff 128px,#0005ff 169px,#1800ff 202px,#9800ff 353px,#ac00ff 375px,#ae00ff 377px)"></i><i style="background:linear-gradient(90deg,#000eff 129px,#0004ff 170px,#1f00ff 211px,#9f00ff 362px,#a0f 374px,#ab00ff 375px)"></i><i style="background:linear-gradient(90deg,#000dff 131px,#0003ff 172px,#2800ff 223px,#8e00ff 344px,#a500ff 371px,#a700ff 373px)"></i><i style="background:linear-gradient(90deg,#000cff 132px,#0002ff 173px,#7b00ff 324px,#9f00ff 365px,#a400ff 371px)"></i><i style="background:linear-gradient(90deg,#000bff 134px,#0101ff 175px,#9b00ff 363px,#a100ff 369px)"></i><i style="background:linear-gradient(90deg,#000aff 135px,#0101ff 176px,#9b00ff 364px,#9d00ff 367px)"></i><i style="background:linear-gradient(90deg,#0009ff 137px,#0300ff 178px,#7c00ff 329px,#9800ff 362px,#9a00ff 365px)"></i><i style="background:linear-gradient(90deg,#0008ff 138px,#0001ff 171px,#0e00ff 193px,#8700ff 344px,#9600ff 362px,#9700ff 363px)"></i><i style="background:linear-gradient(90deg,#0007ff 140px,#00f 173px,#5c00ff 294px,#9100ff 357px,#9400ff 361px)"></i><i style="background:linear-gradient(90deg,#0007ff 141px,#00f 174px,#7500ff 325px,#9000ff 358px,#9100ff 359px)"></i><i style="background:linear-gradient(90deg,#0006ff 143px,#00f 176px,#7500ff 327px,#8b00ff 354px,#8e00ff 357px)"></i><i style="background:linear-gradient(90deg,#0005ff 144px,#00f 177px,#7500ff 328px,#8b00ff 355px)"></i><i style="background:linear-gradient(90deg,#0004ff 146px,#0100ff 179px,#7500ff 330px,#8700ff 352px,#80f 353px)"></i><i style="background:linear-gradient(90deg,#0003ff 147px,#0200ff 180px,#7500ff 331px,#8400ff 349px,#8500ff 351px)"></i><i style="background:linear-gradient(90deg,#0002ff 149px,#0300ff 182px,#7600ff 333px,#8200ff 348px,#8200ff 349px)"></i><i style="background:linear-gradient(90deg,#0001ff 151px,#00f 178px,#7100ff 329px,#8000ff 347px)"></i><i style="background:linear-gradient(90deg,#00f 152px,#00f 179px,#7100ff 330px,#7d00ff 345px)"></i><i style="background:linear-gradient(90deg,#00f 154px,#0100ff 181px,#7200ff 332px,#7b00ff 344px)"></i><i style="background:linear-gradient(90deg,#00f 155px,#0100ff 182px,#7100ff 333px,#70f 341px,#7800ff 342px)"></i><i style="background:linear-gradient(90deg,#00f 157px,#0200ff 184px,#7200ff 335px,#7600ff 340px)"></i><i style="background:linear-gradient(90deg,#00f 159px,#00f 181px,#6e00ff 332px,#7300ff 338px)"></i><i style="background:linear-gradient(90deg,#00f 161px,#0100ff 183px,#6f00ff 334px,#7000ff 336px)"></i><i style="background:linear-gradient(90deg,#00f 162px,#0100ff 184px,#5800ff 305px,#6c00ff 332px,#6e00ff 334px)"></i><i style="background:linear-gradient(90deg,#00f 164px,#0200ff 186px,#5900ff 307px,#6900ff 329px,#6b00ff 332px)"></i><i style="background:linear-gradient(90deg,#00f 166px,#0100ff 184px,#5600ff 305px,#6700ff 327px,#6900ff 330px)"></i><i style="background:linear-gradient(90deg,#00f 168px,#0200ff 186px,#5700ff 307px,#6400ff 325px,#60f 328px)"></i><i style="background:linear-gradient(90deg,#00f 169px,#0200ff 187px,#5700ff 308px,#6400ff 326px)"></i><i style="background:linear-gradient(90deg,#00f 171px,#0300ff 189px,#5700ff 310px,#6000ff 322px,#6200ff 324px)"></i><i style="background:linear-gradient(90deg,#00f 173px,#0200ff 188px,#5600ff 309px,#5f00ff 321px,#5f00ff 322px)"></i><i style="background:linear-gradient(90deg,#00f 175px,#0300ff 190px,#5700ff 311px,#5c00ff 319px,#5d00ff 320px)"></i><i style="background:linear-gradient(90deg,#00f 177px,#0400ff 192px,#5700ff 313px,#5b00ff 318px)"></i><i style="background:linear-gradient(90deg,#00f 179px,#0500ff 194px,#5800ff 315px,#5800ff 316px)"></i><i style="background:linear-gradient(90deg,#00f 181px,#0600ff 196px,#4800ff 293px,#5400ff 311px,#5600ff 314px)"></i><i style="background:linear-gradient(90deg,#00f 183px,#1300ff 216px,#4700ff 294px,#5400ff 312px)"></i><i style="background:linear-gradient(90deg,#00f 185px,#4f00ff 306px,#5200ff 310px)"></i><i style="background:linear-gradient(90deg,#00f 187px,#5000ff 308px)"></i><i style="background:linear-gradient(90deg,#0100ff 190px,#4100ff 287px,#4d00ff 305px,#4e00ff 307px)"></i><i style="background:linear-gradient(90deg,#0200ff 192px,#4100ff 289px,#4b00ff 304px,#4c00ff 305px)"></i><i style="background:linear-gradient(90deg,#0300ff 194px,#4200ff 291px,#4a00ff 303px)"></i><i style="background:linear-gradient(90deg,#0400ff 196px,#4300ff 293px,#4800ff 301px)"></i><i style="background:linear-gradient(90deg,#0500ff 199px,#40f 296px,#4600ff 299px)"></i><i style="background:linear-gradient(90deg,#0600ff 201px,#3800ff 279px,#40f 297px)"></i><i style="background:linear-gradient(90deg,#0700ff 203px,#3900ff 281px,#4100ff 293px,#4200ff 295px)"></i><i style="background:linear-gradient(90deg,#0900ff 206px,#3a00ff 284px,#3f00ff 292px,#4000ff 293px)"></i><i style="background:linear-gradient(90deg,#0900ff 208px,#3b00ff 286px,#3e00ff 291px)"></i><i style="background:linear-gradient(90deg,#0a00ff 210px,#3c00ff 288px,#3c00ff 289px)"></i><i style="background:linear-gradient(90deg,#0c00ff 213px,#30f 276px,#3a00ff 286px,#3a00ff 287px)"></i><i style="background:linear-gradient(90deg,#0d00ff 215px,#3400ff 278px,#3800ff 285px)"></i><i style="background:linear-gradient(90deg,#0e00ff 218px,#3500ff 281px,#3700ff 283px)"></i><i style="background:linear-gradient(90deg,#0f00ff 220px,#2e00ff 271px,#3500ff 281px)"></i><i style="background:linear-gradient(90deg,#1000ff 222px,#2f00ff 273px,#30f 279px)"></i><i style="background:linear-gradient(90deg,#10f 225px,#3000ff 276px,#3100ff 277px)"></i><i style="background:linear-gradient(90deg,#1200ff 227px,#2b00ff 268px,#2f00ff 275px)"></i><i style="background:linear-gradient(90deg,#1400ff 230px,#2c00ff 271px,#2e00ff 273px)"></i><i style="background:linear-gradient(90deg,#1400ff 232px,#2800ff 265px,#2c00ff 272px)"></i><i style="background:linear-gradient(90deg,#1600ff 235px,#2a00ff 268px,#2b00ff 270px)"></i><i style="background:linear-gradient(90deg,#1700ff 237px,#2700ff 264px,#2900ff 268px)"></i><i style="background:linear-gradient(90deg,#1700ff 239px,#2700ff 266px)"></i><i style="background:linear-gradient(90deg,#1900ff 242px,#2600ff 264px)"></i><i style="background:linear-gradient(90deg,#1a00ff 244px,#2400ff 262px)"></i><i style="background:linear-gradient(90deg,#1b00ff 247px,#20f 259px,#20f 260px)"></i><i style="background:linear-gradient(90deg,#1c00ff 250px,#2100ff 258px)"></i><i></i><i></i><i></i><i></i><i></i><i></i></div>
<div style="position:absolute;left:1348px;top:365px;width:196px;height:131px;border:2px solid #7c7c7c;background:#262626"></div>
<div class="cie" style="left:1350px;top:367px;width:196px;height:131px;clip-path:polygon(-935.7px 1456.5px,-938.8px 1457.0px,-946.3px 1456.2px,-956.1px 1451.5px,-973.7px 1441.0px,-1004.3px 1423.2px,-1053.7px 1391.7px,-1087.0px 1365.0px,-1131.7px 1318.1px,-1188.5px 1242.1px,-1260.3px 1121.9px,-1348.9px 943.7px,-1440.2px 696.7px,-1526.1px 388.3px,-1586.0px 59.0px,-1602.9px -246.0px,-1563.7px -496.0px,-1465.7px -657.9px,-1326.9px -715.0px,-1170.5px -695.1px,-1011.8px -641.9px,-862.0px -578.2px,-718.1px -506.7px,-576.2px -428.1px,-435.9px -344.3px,-296.0px -256.8px,-155.6px -166.6px,-16.1px -75.2px,122.7px 16.2px,258.7px 106.6px,390.8px 194.7px,517.4px 279.0px,636.6px 358.2px,745.2px 430.7px,839.7px 493.6px,922.8px 548.9px,991.8px 594.5px,1047.8px 631.9px,1092.5px 661.8px,1156.8px 704.5px,1200.3px 733.6px,1227.7px 751.7px,1243.4px 762.2px,1256.8px 771.1px,1261.8px 774.5px)"><i style="background:linear-gradient(90deg,#c4ff00 0px,#fdff00 151px,#fff100 192px,#fff000 196px)"></i><i style="background:linear-gradient(90deg,#c4ff00 0px,#feff00 151px,#fff100 192px,#ffef00 196px)"></i><i style="background:linear-gradient(90deg,#c5ff00 0px,#feff00 151px,#fff000 192px,#ffef00 196px)"></i><i style="background:linear-gradient(90deg,#c6ff00 0px,#ff0 151px,#ffef00 192px,#fe0 196px)"></i><i style="background:linear-gradient(90deg,#c6ff00 0px,#fffe00 151px,#ffef00 192px,#ffed00 196px)"></i><i style="background:linear-gradient(90deg,#c7ff01 0px,#fffe00 151px,#fe0 192px,#ffed00 196px)"></i><i style="background:linear-gradient(90deg,#c7ff01 0px,#f5ff00 121px,#fffe00 148px,#fe0 189px,#ffec00 196px)"></i><i style="background:linear-gradient(90deg,#c8ff01 0px,#f6ff00 121px,#fffd00 148px,#fe0 189px,#ffeb00 196px)"></i><i style="background:linear-gradient(90deg,#c8ff02 0px,#f7ff00 121px,#fffd00 148px,#ffed00 189px,#ffeb00 196px)"></i><i style="background:linear-gradient(90deg,#c9ff02 0px,#f7ff00 121px,#fffe00 143px,#ffeb00 194px,#ffea00 196px)"></i><i style="background:linear-gradient(90deg,#caff02 0px,#f8ff00 121px,#fffd00 143px,#ffea00 194px,#ffe900 196px)"></i><i style="background:linear-gradient(90deg,#caff03 0px,#f9ff00 121px,#fffc00 143px,#ffe900 194px,#ffe900 196px)"></i><i style="background:linear-gradient(90deg,#cbff03 0px,#f0ff00 97px,#fffe00 138px,#ffea00 189px,#ffe800 196px)"></i><i style="background:linear-gradient(90deg,#cbff03 0px,#e9ff00 78px,#fdff00 129px,#ffe900 192px,#ffe700 196px)"></i><i style="background:linear-gradient(90deg,#ccff04 0px,#eaff00 78px,#feff00 129px,#ffe800 192px,#ffe700 196px)"></i><i style="background:linear-gradient(90deg,#cdff04 0px,#eaff00 78px,#ff0 129px,#ffe700 192px,#ffe600 196px)"></i><i style="background:linear-gradient(90deg,#cdff04 0px,#ebff00 78px,#fffe00 129px,#ffe700 192px,#ffe500 196px)"></i><i style="background:linear-gradient(90deg,#ceff05 0px,#ecff00 78px,#fffe00 129px,#ffe600 192px,#ffe500 196px)"></i><i style="background:linear-gradient(90deg,#ceff05 0px,#ecff00 78px,#fffd00 129px,#ffe500 192px,#ffe400 196px)"></i><i style="background:linear-gradient(90deg,#cfff05 0px,#edff00 78px,#feff00 119px,#ffe800 182px,#ffe400 194px,#ffe300 196px)"></i><i style="background:linear-gradient(90deg,#d0ff06 0px,#ef0 78px,#feff00 119px,#ffe700 182px,#ffe300 194px,#ffe300 196px)"></i><i style="background:linear-gradient(90deg,#d0ff06 0px,#efff00 78px,#ff0 119px,#ffe700 182px,#ffe300 194px,#ffe200 196px)"></i><i style="background:linear-gradient(90deg,#d1ff06 0px,#efff00 78px,#fffe00 119px,#ffe600 182px,#ffe200 194px,#ffe100 196px)"></i><i style="background:linear-gradient(90deg,#d1ff07 0px,#f0ff00 78px,#fffd00 119px,#ffe500 182px,#ffe100 194px,#ffe100 196px)"></i><i style="background:linear-gradient(90deg,#d2ff07 0px,#f8ff00 97px,#fffd00 119px,#ffe500 182px,#ffe100 194px,#ffe000 196px)"></i><i style="background:linear-gradient(90deg,#d3ff07 0px,#f9ff00 97px,#fffd00 115px,#ffe000 193px,#ffdf00 196px)"></i><i style="background:linear-gradient(90deg,#d3ff08 0px,#faff00 97px,#fffd00 115px,#ffe000 193px,#ffdf00 196px)"></i><i style="background:linear-gradient(90deg,#d4ff08 0px,#fbff00 97px,#fffc00 115px,#ffdf00 193px,#ffde00 196px)"></i><i style="background:linear-gradient(90deg,#d5ff08 0px,#fbff00 97px,#fffb00 115px,#ffde00 193px,#fd0 196px)"></i><i style="background:linear-gradient(90deg,#d5ff09 0px,#fcff00 97px,#fff900 119px,#ffe100 182px,#fd0 194px,#fd0 196px)"></i><i style="background:linear-gradient(90deg,#d6ff09 0px,#fdff00 97px,#ffe900 160px,#fd0 193px,#ffdc00 196px)"></i><i style="background:linear-gradient(90deg,#d7ff09 0px,#feff00 97px,#ffdc00 194px,#ffdb00 196px)"></i><i style="background:linear-gradient(90deg,#d7ff0a 0px,#feff00 97px,#ffdb00 194px,#ffdb00 196px)"></i><i style="background:linear-gradient(90deg,#d8ff0a 0px,#ff0 97px,#ffdb00 194px,#ffda00 196px)"></i><i style="background:linear-gradient(90deg,#d8ff0a 0px,#fffe01 97px,#ffda00 194px,#ffd900 196px)"></i><i style="background:linear-gradient(90deg,#d9ff0b 0px,#fffd01 97px,#ffd900 194px,#ffd900 196px)"></i><i style="background:linear-gradient(90deg,#daff0b 0px,#f9ff03 78px,#fffd02 96px,#ffd900 193px,#ffd800 196px)"></i><i style="background:linear-gradient(90deg,#daff0b 0px,#faff04 78px,#fffc02 96px,#ffd800 193px,#ffd700 196px)"></i><i style="background:linear-gradient(90deg,#dbff0c 0px,#fbff04 78px,#fffc02 96px,#ffd800 193px,#ffd700 196px)"></i><i style="background:linear-gradient(90deg,#dcff0c 0px,#fcff04 78px,#fffb03 96px,#ffd700 193px,#ffd600 196px)"></i><i style="background:linear-gradient(90deg,#dcff0d 0px,#fcff05 78px,#fff602 105px,#ffda00 183px,#ffd600 195px,#ffd600 196px)"></i><i style="background:linear-gradient(90deg,#ddff0d 0px,#fdff05 78px,#ffe200 156px,#ffd700 189px,#ffd500 196px)"></i><i style="background:linear-gradient(90deg,#deff0d 0px,#feff06 78px,#ffe200 156px,#ffd600 189px,#ffd400 196px)"></i><i style="background:linear-gradient(90deg,#deff0e 0px,#ffff06 78px,#ffe100 156px,#ffd600 189px,#ffd400 196px)"></i><i style="background:linear-gradient(90deg,#dfff0e 0px,#ffff06 78px,#ffe000 156px,#ffd500 189px,#ffd300 196px)"></i><i style="background:linear-gradient(90deg,#e0ff0e 0px,#fffe07 78px,#ffe000 156px,#ffd500 189px,#ffd200 196px)"></i><i style="background:linear-gradient(90deg,#e0ff0f 0px,#fffd07 78px,#ffdf00 156px,#ffd400 189px,#ffd200 196px)"></i><i style="background:linear-gradient(90deg,#e1ff0f 0px,#fbff09 63px,#fffb07 81px,#fd0 159px,#ffd200 192px,#ffd100 196px)"></i><i style="background:linear-gradient(90deg,#e2ff10 0px,#fcff09 63px,#fff907 85px,#ffdb00 163px,#ffd000 196px)"></i><i style="background:linear-gradient(90deg,#e3ff10 0px,#fdff0a 63px,#ffdc00 160px,#ffd100 193px,#ffd000 196px)"></i><i style="background:linear-gradient(90deg,#e3ff10 0px,#feff0a 63px,#ffdb00 160px,#ffd000 193px,#ffcf00 196px)"></i><i style="background:linear-gradient(90deg,#e4ff11 0px,#feff0a 63px,#ffd200 184px,#ffce00 196px)"></i><i style="background:linear-gradient(90deg,#e5ff11 0px,#ffff0b 63px,#ffd200 184px,#ffce00 196px)"></i><i style="background:linear-gradient(90deg,#e5ff11 0px,#fffe0b 63px,#ffd100 184px,#ffcd00 196px)"></i><i style="background:linear-gradient(90deg,#e6ff12 0px,#fffd0b 63px,#ffd000 184px,#ffcd00 196px)"></i><i style="background:linear-gradient(90deg,#e7ff12 0px,#fcff0d 51px,#fff80b 73px,#ffcd00 194px,#fc0 196px)"></i><i style="background:linear-gradient(90deg,#e7ff13 0px,#fdff0e 51px,#ffd301 172px,#fc0 194px,#ffcb00 196px)"></i><i style="background:linear-gradient(90deg,#e8ff13 0px,#feff0e 51px,#ffd201 172px,#ffcb00 194px,#ffcb00 196px)"></i><i style="background:linear-gradient(90deg,#e9ff13 0px,#ffff0e 51px,#ffd201 172px,#ffcb00 194px,#ffca00 196px)"></i><i style="background:linear-gradient(90deg,#eaff14 0px,#fffe0f 51px,#ffd101 172px,#ffca00 194px,#ffc900 196px)"></i><i style="background:linear-gradient(90deg,#eaff14 0px,#fffe0f 51px,#ffd002 172px,#ffc900 194px,#ffc900 196px)"></i><i style="background:linear-gradient(90deg,#ebff15 0px,#fffd0f 51px,#ffd002 172px,#ffc900 194px,#ffc800 196px)"></i><i style="background:linear-gradient(90deg,#ecff15 0px,#feff11 41px,#ffc901 192px,#ffc700 196px)"></i><i style="background:linear-gradient(90deg,#edff15 0px,#feff11 41px,#ffd204 162px,#ffc701 195px,#ffc700 196px)"></i><i style="background:linear-gradient(90deg,#edff16 0px,#ffff12 41px,#ffd104 162px,#ffc701 195px,#ffc601 196px)"></i><i style="background:linear-gradient(90deg,#eeff16 0px,#fffe12 41px,#ffd004 162px,#ffc601 195px,#ffc601 196px)"></i></div>
<svg width="1563" height="841" viewBox="0 0 1563 841">
<defs><linearGradient id="g1" x1="0" y1="0" x2="0" y2="1"><stop offset="0" stop-color="#5c5c5c"/><stop offset="1" stop-color="#3e3e3e"/></linearGradient><linearGradient id="g2" x1="0" y1="0" x2="1" y2="0"><stop offset="0" stop-color="#f02828"/><stop offset="0.5" stop-color="#d01818"/><stop offset="1" stop-color="#881010"/></linearGradient><linearGradient id="g3" x1="0" y1="0" x2="1" y2="0"><stop offset="0" stop-color="#32c232"/><stop offset="0.5" stop-color="#21a621"/><stop offset="1" stop-color="#166c16"/></linearGradient><linearGradient id="g4" x1="0" y1="0" x2="1" y2="0"><stop offset="0" stop-color="#2828ca"/><stop offset="0.5" stop-color="#1818ad"/><stop offset="1" stop-color="#101071"/></linearGradient><linearGradient id="g5" x1="0" y1="0" x2="1" y2="0"><stop offset="0" stop-color="#36d6d6"/><stop offset="0.5" stop-color="#25b8b8"/><stop offset="1" stop-color="#187878"/></linearGradient><linearGradient id="g6" x1="0" y1="0" x2="1" y2="0"><stop offset="0" stop-color="#e42ce4"/><stop offset="0.5" stop-color="#c51cc5"/><stop offset="1" stop-color="#801280"/></linearGradient><linearGradient id="g7" x1="0" y1="0" x2="1" y2="0"><stop offset="0" stop-color="#e4e42c"/><stop offset="0.5" stop-color="#c5c51c"/><stop offset="1" stop-color="#808012"/></linearGradient><linearGradient id="g8" x1="0" y1="0" x2="1" y2="0"><stop offset="0" stop-color="#e74747"/><stop offset="0.5" stop-color="#c73434"/><stop offset="1" stop-color="#822222"/></linearGradient><linearGradient id="g9" x1="0" y1="0" x2="1" y2="0"><stop offset="0" stop-color="#4fc24f"/><stop offset="0.5" stop-color="#3ca63c"/><stop offset="1" stop-color="#276c27"/></linearGradient><linearGradient id="g10" x1="0" y1="0" x2="1" y2="0"><stop offset="0" stop-color="#4747c8"/><stop offset="0.5" stop-color="#3434ab"/><stop offset="1" stop-color="#222270"/></linearGradient><linearGradient id="g11" x1="0" y1="0" x2="1" y2="0"><stop offset="0" stop-color="#52d2d2"/><stop offset="0.5" stop-color="#3fb4b4"/><stop offset="1" stop-color="#297676"/></linearGradient><linearGradient id="g12" x1="0" y1="0" x2="1" y2="0"><stop offset="0" stop-color="#dd4add"/><stop offset="0.5" stop-color="#bf37bf"/><stop offset="1" stop-color="#7c247c"/></linearGradient><linearGradient id="g13" x1="0" y1="0" x2="1" y2="0"><stop offset="0" stop-color="#dddd4a"/><stop offset="0.5" stop-color="#bfbf37"/><stop offset="1" stop-color="#7c7c24"/></linearGradient><linearGradient id="g14" x1="0" y1="0" x2="1" y2="0"><stop offset="0" stop-color="#de6666"/><stop offset="0.5" stop-color="#bf5151"/><stop offset="1" stop-color="#7d3535"/></linearGradient><linearGradient id="g15" x1="0" y1="0" x2="1" y2="0"><stop offset="0" stop-color="#6cc26c"/><stop offset="0.5" stop-color="#56a656"/><stop offset="1" stop-color="#386c38"/></linearGradient><linearGradient id="g16" x1="0" y1="0" x2="1" y2="0"><stop offset="0" stop-color="#6666c7"/><stop offset="0.5" stop-color="#5151aa"/><stop offset="1" stop-color="#35356f"/></linearGradient><linearGradient id="g17" x1="0" y1="0" x2="1" y2="0"><stop offset="0" stop-color="#6ecece"/><stop offset="0.5" stop-color="#58b1b1"/><stop offset="1" stop-color="#3a7373"/></linearGradient><linearGradient id="g18" x1="0" y1="0" x2="1" y2="0"><stop offset="0" stop-color="#d668d6"/><stop offset="0.5" stop-color="#b853b8"/><stop offset="1" stop-color="#783678"/></linearGradient><linearGradient id="g19" x1="0" y1="0" x2="1" y2="0"><stop offset="0" stop-color="#d6d668"/><stop offset="0.5" stop-color="#b8b853"/><stop offset="1" stop-color="#787836"/></linearGradient><linearGradient id="g20" x1="0" y1="0" x2="1" y2="0"><stop offset="0" stop-color="#d48484"/><stop offset="0.5" stop-color="#b76d6d"/><stop offset="1" stop-color="#774747"/></linearGradient><linearGradient id="g21" x1="0" y1="0" x2="1" y2="0"><stop offset="0" stop-color="#88c288"/><stop offset="0.5" stop-color="#71a671"/><stop offset="1" stop-color="#496c49"/></linearGradient><linearGradient id="g22" x1="0" y1="0" x2="1" y2="0"><stop offset="0" stop-color="#8484c5"/><stop offset="0.5" stop-color="#6d6da9"/><stop offset="1" stop-color="#47476e"/></linearGradient><linearGradient id="g23" x1="0" y1="0" x2="1" y2="0"><stop offset="0" stop-color="#8acaca"/><stop offset="0.5" stop-color="#72adad"/><stop offset="1" stop-color="#4a7171"/></linearGradient><linearGradient id="g24" x1="0" y1="0" x2="1" y2="0"><stop offset="0" stop-color="#d086d0"/><stop offset="0.5" stop-color="#b26eb2"/><stop offset="1" stop-color="#744874"/></linearGradient><linearGradient id="g25" x1="0" y1="0" x2="1" y2="0"><stop offset="0" stop-color="#d0d086"/><stop offset="0.5" stop-color="#b2b26e"/><stop offset="1" stop-color="#747448"/></linearGradient><linearGradient id="g26" x1="0" y1="0" x2="1" y2="0"><stop offset="0" stop-color="#cba3a3"/><stop offset="0.5" stop-color="#ae8989"/><stop offset="1" stop-color="#725a5a"/></linearGradient><linearGradient id="g27" x1="0" y1="0" x2="1" y2="0"><stop offset="0" stop-color="#a5c2a5"/><stop offset="0.5" stop-color="#8ba68b"/><stop offset="1" stop-color="#5b6c5b"/></linearGradient><linearGradient id="g28" x1="0" y1="0" x2="1" y2="0"><stop offset="0" stop-color="#a3a3c4"/><stop offset="0.5" stop-color="#8989a7"/><stop offset="1" stop-color="#5a5a6d"/></linearGradient><linearGradient id="g29" x1="0" y1="0" x2="1" y2="0"><stop offset="0" stop-color="#a6c6c6"/><stop offset="0.5" stop-color="#8ca9a9"/><stop offset="1" stop-color="#5b6e6e"/></linearGradient><linearGradient id="g30" x1="0" y1="0" x2="1" y2="0"><stop offset="0" stop-color="#c9a4c9"/><stop offset="0.5" stop-color="#ac8aac"/><stop offset="1" stop-color="#705a70"/></linearGradient><linearGradient id="g31" x1="0" y1="0" x2="1" y2="0"><stop offset="0" stop-color="#c9c9a4"/><stop offset="0.5" stop-color="#acac8a"/><stop offset="1" stop-color="#70705a"/></linearGradient><linearGradient id="g32" x1="0" y1="0" x2="1" y2="0"><stop offset="0" stop-color="#ffffff"/><stop offset="0.5" stop-color="#f0f0f0"/><stop offset="1" stop-color="#8c8c8c"/></linearGradient><linearGradient id="g33" x1="0" y1="0" x2="0" y2="1"><stop offset="0" stop-color="#d8d864"/><stop offset="0.1" stop-color="#c8c80a"/><stop offset="0.5" stop-color="#c2c200"/><stop offset="1" stop-color="#4c4c00"/></linearGradient><linearGradient id="g34" x1="0" y1="0" x2="0" y2="1"><stop offset="0" stop-color="#d8d864"/><stop offset="0.1" stop-color="#c8c80a"/><stop offset="0.5" stop-color="#c2c200"/><stop offset="1" stop-color="#4c4c00"/></linearGradient><linearGradient id="g35" x1="0" y1="0" x2="0" y2="1"><stop offset="0" stop-color="#d8d864"/><stop offset="0.1" stop-color="#c8c80a"/><stop offset="0.5" stop-color="#c2c200"/><stop offset="1" stop-color="#4c4c00"/></linearGradient><linearGradient id="g36" x1="0" y1="0" x2="0" y2="1"><stop offset="0" stop-color="#ff6464"/><stop offset="1" stop-color="#ff4040"/></linearGradient><linearGradient id="g37" x1="0" y1="0" x2="0" y2="1"><stop offset="0" stop-color="#5cb05c"/><stop offset="0.6" stop-color="#339a33"/><stop offset="1" stop-color="#2a962a"/></linearGradient><linearGradient id="g38" x1="0" y1="0" x2="0" y2="1"><stop offset="0" stop-color="#5a5aff"/><stop offset="1" stop-color="#3636ff"/></linearGradient><linearGradient id="g39" x1="0" y1="0" x2="0" y2="1"><stop offset="0" stop-color="#363636"/><stop offset="0.48" stop-color="#2f2f2f"/><stop offset="0.5" stop-color="#1c1c1c"/><stop offset="1" stop-color="#111111"/></linearGradient><linearGradient id="g40" x1="0" y1="0" x2="0" y2="1"><stop offset="0" stop-color="#484848"/><stop offset="0.5" stop-color="#353535"/><stop offset="1" stop-color="#272727"/></linearGradient><linearGradient id="g41" x1="0" y1="0" x2="1" y2="0"><stop offset="0" stop-color="#000"/><stop offset="0.5" stop-color="#000"/><stop offset="1" stop-color="#000"/></linearGradient><linearGradient id="vig" x1="0" y1="0" x2="1" y2="0"><stop offset="0" stop-color="#000" stop-opacity="0.16"/><stop offset="0.45" stop-color="#000" stop-opacity="0"/><stop offset="0.7" stop-color="#000" stop-opacity="0"/><stop offset="1" stop-color="#000" stop-opacity="0.2"/></linearGradient><linearGradient id="g42" x1="0" y1="0" x2="0" y2="1"><stop offset="0" stop-color="#a8a8a4"/><stop offset="0.08" stop-color="#989898"/><stop offset="0.5" stop-color="#7c7c7c"/><stop offset="1" stop-color="#5e5e5e"/></linearGradient><linearGradient id="g43" x1="0" y1="0" x2="0" y2="1"><stop offset="0" stop-color="#1a1a1a"/><stop offset="1" stop-color="#333333"/></linearGradient><linearGradient id="g44" x1="0" y1="0" x2="0" y2="1"><stop offset="0" stop-color="#6e6e6e"/><stop offset="1" stop-color="#a0a0a0"/></linearGradient><linearGradient id="g45" x1="0" y1="0" x2="0" y2="1"><stop offset="0" stop-color="#9a9a9a"/><stop offset="0.5" stop-color="#888888"/><stop offset="1" stop-color="#6c6c6c"/></linearGradient><linearGradient id="g46" x1="0" y1="0" x2="0" y2="1"><stop offset="0" stop-color="#a6a6a6"/><stop offset="0.5" stop-color="#9c9c9c"/><stop offset="0.5" stop-color="#828282"/><stop offset="1" stop-color="#7a7a7a"/></linearGradient><linearGradient id="g47" x1="0" y1="0" x2="0" y2="1"><stop offset="0" stop-color="#1c1c1c"/><stop offset="0.5" stop-color="#161616"/><stop offset="0.5" stop-color="#000"/><stop offset="1" stop-color="#000"/></linearGradient><linearGradient id="g48" x1="0" y1="0" x2="0" y2="1"><stop offset="0" stop-color="#6a6a6a"/><stop offset="1" stop-color="#9c9c9c"/></linearGradient></defs>
<clipPath id="cp"><rect x="954" y="46" width="599" height="461"/></clipPath>
<path clip-path="url(#cp)" fill="#000" fill-opacity="0.4" fill-rule="evenodd" d="M1210.0 494.4L1205.4 494.1L1204.3 493.4L1202.9 492.5L1201.3 491.3L1199.4 489.7L1197.1 487.9L1194.4 485.7L1191.4 483.1L1187.9 480.2L1184.1 477.0L1179.7 473.5L1174.8 469.4L1169.3 464.9L1163.2 459.8L1156.5 454.1L1149.1 447.6L1141.0 440.2L1132.3 431.7L1122.3 421.2L1110.6 407.7L1097.5 391.2L1083.2 372.1L1068.1 350.2L1052.4 325.7L1036.3 299.2L1020.4 271.8L1005.7 244.1L992.7 216.9L981.7 191.1L972.6 167.5L965.5 146.5L960.4 128.5L957.1 113.3L955.3 100.7L955.0 90.2L956.0 81.5L958.2 74.4L961.6 68.6L965.9 64.3L971.0 61.2L976.7 59.1L989.6 57.2L1003.6 56.8L1017.8 56.9L1032.7 57.6L1048.7 58.8L1066.1 60.4L1085.3 62.3L1106.5 64.6L1129.9 67.2L1155.9 70.1L1184.4 73.4L1215.5 77.0L1249.1 80.8L1284.6 84.9L1321.1 89.1L1356.5 93.2L1390.9 97.1L1422.1 100.7L1449.6 103.8L1473.1 106.5L1492.7 108.8L1509.3 110.7L1523.6 112.4L1535.8 113.8L1545.5 114.9L1553.2 115.7L1559.1 116.4L1563.6 116.9L1567.0 117.3L1569.5 117.6L1571.3 117.8L1572.6 118.0L1573.5 118.1L1574.3 118.2L1575.1 118.3L1576.1 118.4ZM1449.2 103.7L1052.1 63.7L1128.8 385.9Z"/>
<text x="1237" y="41" font-size="12.5" fill="#d8d8d8" text-anchor="middle">CIE 1976 u'v'</text>
<line x1="953.5" y1="45.5" x2="1553.5" y2="45.5" stroke="#8a8a8a" stroke-width="1.2"/>
<line x1="1553.2" y1="45" x2="1553.2" y2="507" stroke="#6a6a6a" stroke-width="1.2"/>
<line x1="953.5" y1="45" x2="953.5" y2="513.5" stroke="#9a9a9a" stroke-width="1.5"/>
<line x1="953" y1="507.3" x2="1554" y2="507.3" stroke="#9a9a9a" stroke-width="1.6"/>
<line x1="948.5" y1="507.1" x2="953" y2="507.1" stroke="#e0e0e0" stroke-width="1.8"/>
<text x="946" y="512.0" font-size="13" fill="#d2d2d2" text-anchor="end">0</text>
<text x="953.6" y="527.8" font-size="13" fill="#d2d2d2" text-anchor="middle">0</text>
<line x1="948.5" y1="468.725" x2="953" y2="468.725" stroke="#e0e0e0" stroke-width="1.8"/>
<text x="946" y="473.625" font-size="13" fill="#d2d2d2" text-anchor="end">0,05</text>
<line x1="1003.525" y1="507" x2="1003.525" y2="513.5" stroke="#e0e0e0" stroke-width="1.6"/>
<text x="1003.525" y="527.8" font-size="13" fill="#d2d2d2" text-anchor="middle">0,05</text>
<line x1="948.5" y1="430.35" x2="953" y2="430.35" stroke="#e0e0e0" stroke-width="1.8"/>
<text x="946" y="435.25" font-size="13" fill="#d2d2d2" text-anchor="end">0,1</text>
<line x1="1053.45" y1="507" x2="1053.45" y2="513.5" stroke="#e0e0e0" stroke-width="1.6"/>
<text x="1053.45" y="527.8" font-size="13" fill="#d2d2d2" text-anchor="middle">0,1</text>
<line x1="948.5" y1="391.975" x2="953" y2="391.975" stroke="#e0e0e0" stroke-width="1.8"/>
<text x="946" y="396.875" font-size="13" fill="#d2d2d2" text-anchor="end">0,15</text>
<line x1="1103.375" y1="507" x2="1103.375" y2="513.5" stroke="#e0e0e0" stroke-width="1.6"/>
<text x="1103.375" y="527.8" font-size="13" fill="#d2d2d2" text-anchor="middle">0,15</text>
<line x1="948.5" y1="353.6" x2="953" y2="353.6" stroke="#e0e0e0" stroke-width="1.8"/>
<text x="946" y="358.5" font-size="13" fill="#d2d2d2" text-anchor="end">0,2</text>
<line x1="1153.3" y1="507" x2="1153.3" y2="513.5" stroke="#e0e0e0" stroke-width="1.6"/>
<text x="1153.3" y="527.8" font-size="13" fill="#d2d2d2" text-anchor="middle">0,2</text>
<line x1="948.5" y1="315.225" x2="953" y2="315.225" stroke="#e0e0e0" stroke-width="1.8"/>
<text x="946" y="320.125" font-size="13" fill="#d2d2d2" text-anchor="end">0,25</text>
<line x1="1203.225" y1="507" x2="1203.225" y2="513.5" stroke="#e0e0e0" stroke-width="1.6"/>
<text x="1203.225" y="527.8" font-size="13" fill="#d2d2d2" text-anchor="middle">0,25</text>
<line x1="948.5" y1="276.85" x2="953" y2="276.85" stroke="#e0e0e0" stroke-width="1.8"/>
<text x="946" y="281.75" font-size="13" fill="#d2d2d2" text-anchor="end">0,3</text>
<line x1="1253.15" y1="507" x2="1253.15" y2="513.5" stroke="#e0e0e0" stroke-width="1.6"/>
<text x="1253.15" y="527.8" font-size="13" fill="#d2d2d2" text-anchor="middle">0,3</text>
<line x1="948.5" y1="238.47500000000002" x2="953" y2="238.47500000000002" stroke="#e0e0e0" stroke-width="1.8"/>
<text x="946" y="243.37500000000003" font-size="13" fill="#d2d2d2" text-anchor="end">0,35</text>
<line x1="1303.075" y1="507" x2="1303.075" y2="513.5" stroke="#e0e0e0" stroke-width="1.6"/>
<text x="1303.075" y="527.8" font-size="13" fill="#d2d2d2" text-anchor="middle">0,35</text>
<line x1="948.5" y1="200.10000000000002" x2="953" y2="200.10000000000002" stroke="#e0e0e0" stroke-width="1.8"/>
<text x="946" y="205.00000000000003" font-size="13" fill="#d2d2d2" text-anchor="end">0,4</text>
<line x1="1353.0" y1="507" x2="1353.0" y2="513.5" stroke="#e0e0e0" stroke-width="1.6"/>
<text x="1353.0" y="527.8" font-size="13" fill="#d2d2d2" text-anchor="middle">0,4</text>
<line x1="948.5" y1="161.72500000000002" x2="953" y2="161.72500000000002" stroke="#e0e0e0" stroke-width="1.8"/>
<text x="946" y="166.62500000000003" font-size="13" fill="#d2d2d2" text-anchor="end">0,45</text>
<line x1="1402.925" y1="507" x2="1402.925" y2="513.5" stroke="#e0e0e0" stroke-width="1.6"/>
<text x="1402.925" y="527.8" font-size="13" fill="#d2d2d2" text-anchor="middle">0,45</text>
<line x1="948.5" y1="123.35000000000002" x2="953" y2="123.35000000000002" stroke="#e0e0e0" stroke-width="1.8"/>
<text x="946" y="128.25000000000003" font-size="13" fill="#d2d2d2" text-anchor="end">0,5</text>
<line x1="1452.85" y1="507" x2="1452.85" y2="513.5" stroke="#e0e0e0" stroke-width="1.6"/>
<text x="1452.85" y="527.8" font-size="13" fill="#d2d2d2" text-anchor="middle">0,5</text>
<line x1="948.5" y1="84.97499999999997" x2="953" y2="84.97499999999997" stroke="#e0e0e0" stroke-width="1.8"/>
<text x="946" y="89.87499999999997" font-size="13" fill="#d2d2d2" text-anchor="end">0,55</text>
<line x1="1502.775" y1="507" x2="1502.775" y2="513.5" stroke="#e0e0e0" stroke-width="1.6"/>
<text x="1502.775" y="527.8" font-size="13" fill="#d2d2d2" text-anchor="middle">0,55</text>
<rect x="1114.7" y="114.7" width="12.6" height="12.6" fill="none" stroke="#fff" stroke-width="1.3" opacity="0.86"/>
<rect x="1091.7" y="95.7" width="12.6" height="12.6" fill="none" stroke="#fff" stroke-width="1.3" opacity="0.86"/>
<rect x="1072.8" y="79.6" width="12.6" height="12.6" fill="none" stroke="#fff" stroke-width="1.3" opacity="0.86"/>
<rect x="1058.6" y="66.7" width="12.6" height="12.6" fill="none" stroke="#fff" stroke-width="1.3" opacity="0.86"/>
<rect x="1045.8" y="56.8" width="12.6" height="12.6" fill="none" stroke="#fff" stroke-width="1.5"/>
<rect x="1146.8" y="121.6" width="12.6" height="12.6" fill="none" stroke="#fff" stroke-width="1.3" opacity="0.86"/>
<rect x="1147.9" y="105.8" width="12.6" height="12.6" fill="none" stroke="#fff" stroke-width="1.3" opacity="0.86"/>
<rect x="1149.0" y="91.5" width="12.6" height="12.6" fill="none" stroke="#fff" stroke-width="1.3" opacity="0.86"/>
<rect x="1150.9" y="77.7" width="12.6" height="12.6" fill="none" stroke="#fff" stroke-width="1.3" opacity="0.86"/>
<rect x="1151.7" y="66.5" width="12.6" height="12.6" fill="none" stroke="#fff" stroke-width="1.5"/>
<rect x="1128.8" y="142.6" width="12.6" height="12.6" fill="none" stroke="#fff" stroke-width="1.3" opacity="0.86"/>
<rect x="1113.8" y="145.8" width="12.6" height="12.6" fill="none" stroke="#fff" stroke-width="1.3" opacity="0.86"/>
<rect x="1098.0" y="146.9" width="12.6" height="12.6" fill="none" stroke="#fff" stroke-width="1.3" opacity="0.86"/>
<rect x="1082.8" y="149.8" width="12.6" height="12.6" fill="none" stroke="#fff" stroke-width="1.3" opacity="0.86"/>
<rect x="1067.6" y="151.7" width="12.6" height="12.6" fill="none" stroke="#fff" stroke-width="1.5"/>
<rect x="1196.6" y="132.6" width="12.6" height="12.6" fill="none" stroke="#fff" stroke-width="1.3" opacity="0.86"/>
<rect x="1251.6" y="125.6" width="12.6" height="12.6" fill="none" stroke="#fff" stroke-width="1.3" opacity="0.86"/>
<rect x="1314.6" y="114.6" width="12.6" height="12.6" fill="none" stroke="#fff" stroke-width="1.3" opacity="0.86"/>
<rect x="1376.5" y="105.7" width="12.6" height="12.6" fill="none" stroke="#fff" stroke-width="1.3" opacity="0.86"/>
<rect x="1442.6" y="95.8" width="12.6" height="12.6" fill="none" stroke="#fff" stroke-width="1.5"/>
<rect x="1161.7" y="154.6" width="12.6" height="12.6" fill="none" stroke="#fff" stroke-width="1.3" opacity="0.86"/>
<rect x="1182.7" y="172.6" width="12.6" height="12.6" fill="none" stroke="#fff" stroke-width="1.3" opacity="0.86"/>
<rect x="1207.7" y="194.0" width="12.6" height="12.6" fill="none" stroke="#fff" stroke-width="1.3" opacity="0.86"/>
<rect x="1235.6" y="218.6" width="12.6" height="12.6" fill="none" stroke="#fff" stroke-width="1.3" opacity="0.86"/>
<rect x="1271.8" y="247.7" width="12.6" height="12.6" fill="none" stroke="#fff" stroke-width="1.5"/>
<rect x="1141.7" y="168.6" width="12.6" height="12.6" fill="none" stroke="#fff" stroke-width="1.3" opacity="0.86"/>
<rect x="1138.7" y="204.5" width="12.6" height="12.6" fill="none" stroke="#fff" stroke-width="1.3" opacity="0.86"/>
<rect x="1134.5" y="247.6" width="12.6" height="12.6" fill="none" stroke="#fff" stroke-width="1.3" opacity="0.86"/>
<rect x="1128.6" y="305.6" width="12.6" height="12.6" fill="none" stroke="#fff" stroke-width="1.3" opacity="0.86"/>
<rect x="1122.6" y="379.5" width="12.6" height="12.6" fill="none" stroke="#fff" stroke-width="1.5"/>
<rect x="1143.8" y="140.7" width="12.4" height="12.4" fill="none" stroke="#000" stroke-width="1.7"/>
<circle cx="1113.4" cy="116.4" r="3.9" fill="#a0b8a0" stroke="#000" stroke-width="1"/>
<circle cx="1092.4" cy="97.4" r="3.9" fill="#84b884" stroke="#000" stroke-width="1"/>
<circle cx="1077.5" cy="81.6" r="3.9" fill="#66b866" stroke="#000" stroke-width="1"/>
<circle cx="1064.6" cy="71.4" r="3.9" fill="#44b844" stroke="#000" stroke-width="1"/>
<circle cx="1055.5" cy="62.5" r="3.9" fill="#12b812" stroke="#000" stroke-width="1"/>
<circle cx="1141.5" cy="122.5" r="3.9" fill="#c6bca0" stroke="#000" stroke-width="1"/>
<circle cx="1142.4" cy="107.6" r="3.9" fill="#c6bc84" stroke="#000" stroke-width="1"/>
<circle cx="1142.5" cy="94.4" r="3.9" fill="#c6bc66" stroke="#000" stroke-width="1"/>
<circle cx="1143.5" cy="81.4" r="3.9" fill="#c6bc44" stroke="#000" stroke-width="1"/>
<circle cx="1143.5" cy="71.7" r="3.9" fill="#c6bc12" stroke="#000" stroke-width="1"/>
<circle cx="1127.5" cy="143.3" r="3.9" fill="#a0c0c0" stroke="#000" stroke-width="1"/>
<circle cx="1113.5" cy="145.4" r="3.9" fill="#84c0c0" stroke="#000" stroke-width="1"/>
<circle cx="1100.5" cy="146.4" r="3.9" fill="#66c0c0" stroke="#000" stroke-width="1"/>
<circle cx="1087.5" cy="148.4" r="3.9" fill="#44c0c0" stroke="#000" stroke-width="1"/>
<circle cx="1074.6" cy="149.4" r="3.9" fill="#12c0c0" stroke="#000" stroke-width="1"/>
<circle cx="1191.3" cy="135.5" r="3.9" fill="#c0a0a0" stroke="#000" stroke-width="1"/>
<circle cx="1244.4" cy="128.8" r="3.9" fill="#c08484" stroke="#000" stroke-width="1"/>
<circle cx="1311.4" cy="121.5" r="3.9" fill="#c06666" stroke="#000" stroke-width="1"/>
<circle cx="1377.5" cy="112.4" r="3.9" fill="#c04444" stroke="#000" stroke-width="1"/>
<circle cx="1450.6" cy="104.4" r="3.9" fill="#c01212" stroke="#000" stroke-width="1"/>
<circle cx="1157.6" cy="158.3" r="3.9" fill="#c0a0c0" stroke="#000" stroke-width="1"/>
<circle cx="1179.7" cy="177.5" r="3.9" fill="#c084c0" stroke="#000" stroke-width="1"/>
<circle cx="1205.4" cy="201.4" r="3.9" fill="#c066c0" stroke="#000" stroke-width="1"/>
<circle cx="1235.4" cy="229.3" r="3.9" fill="#c044c0" stroke="#000" stroke-width="1"/>
<circle cx="1274.5" cy="265.3" r="3.9" fill="#c012c0" stroke="#000" stroke-width="1"/>
<circle cx="1140.3" cy="171.5" r="3.9" fill="#a0a0c0" stroke="#000" stroke-width="1"/>
<circle cx="1138.5" cy="208.3" r="3.9" fill="#8484c0" stroke="#000" stroke-width="1"/>
<circle cx="1137.5" cy="252.6" r="3.9" fill="#6666c0" stroke="#000" stroke-width="1"/>
<circle cx="1134.2" cy="314.3" r="3.9" fill="#4444c0" stroke="#000" stroke-width="1"/>
<circle cx="1131.6" cy="393.6" r="3.9" fill="#1212c0" stroke="#000" stroke-width="1"/>
<circle cx="1141.5" cy="141.3" r="3.9" fill="#ffffff" stroke="#000" stroke-width="1"/>
<circle cx="1136.5" cy="176.3" r="4.3" fill="#000000" stroke="#000" stroke-width="1"/>
<clipPath id="cp2"><rect x="1350" y="367" width="196" height="131"/></clipPath>
<path clip-path="url(#cp2)" fill="#000" fill-opacity="0.4" fill-rule="evenodd" d="M414.3 1823.5L411.2 1824.0L403.7 1823.2L393.9 1818.5L376.3 1808.0L345.7 1790.2L296.3 1758.7L263.0 1732.0L218.3 1685.1L161.5 1609.1L89.7 1488.9L1.1 1310.7L-90.2 1063.7L-176.1 755.3L-236.0 426.0L-252.9 121.0L-213.7 -129.0L-115.7 -290.9L23.1 -348.0L179.5 -328.1L338.2 -274.9L488.0 -211.2L631.9 -139.7L773.8 -61.1L914.1 22.7L1054.0 110.2L1194.4 200.4L1333.9 291.8L1472.7 383.2L1608.7 473.6L1740.8 561.7L1867.4 646.0L1986.6 725.2L2095.2 797.7L2189.7 860.6L2272.8 915.9L2341.8 961.5L2397.8 998.9L2442.5 1028.8L2506.8 1071.5L2550.3 1100.6L2577.7 1118.7L2593.4 1129.2L2606.8 1138.1L2611.8 1141.5ZM2397.4 998.2L770.6 28.8L319.8 1679.4Z"/>
<rect x="1441.0" y="425.7" width="12.6" height="12.6" fill="none" stroke="#fff" stroke-width="1.5"/>
<circle cx="1381.3" cy="381.0" r="3.7" fill="#c8c020" stroke="#000" stroke-width="1"/>
<text x="5.5" y="51" font-size="39.5" fill="#f2f2f2" textLength="173" lengthAdjust="spacingAndGlyphs" stroke="#333333" stroke-width="0.45">Saturation</text>
<text x="190.5" y="51" font-size="39.5" fill="#f2f2f2" textLength="127" lengthAdjust="spacingAndGlyphs" stroke="#333333" stroke-width="0.45">Sweeps</text>
<text x="114.5" y="101.5" font-size="19" fill="#f2f2f2" textLength="101" lengthAdjust="spacingAndGlyphs">dE Formula:</text>
<rect x="222.5" y="83.5" width="127" height="22.5" fill="url(#g1)" stroke="#5a5a5a" stroke-width="1"/>
<text x="227.5" y="101.5" font-size="15.5" fill="#f0f0f0">2000</text>
<path d="M335.3 92h8l-4 6.2z" fill="#000"/>
<text x="523" y="44" font-size="19.5" fill="#f2f2f2" textLength="56.5" lengthAdjust="spacingAndGlyphs">Levels:</text>
<rect x="586.5" y="25.4" width="318" height="23.6" fill="url(#g1)" stroke="#5a5a5a" stroke-width="1"/>
<text x="591.5" y="43.5" font-size="15.5" fill="#f0f0f0" textLength="83.5" lengthAdjust="spacingAndGlyphs">20% Sweeps</text>
<path d="M891.6 35h8l-4 6z" fill="#000"/>
<rect x="39" y="136.5" width="292.5" height="362.5" fill="#262626"/>
<text x="168" y="131.5" font-size="13" fill="#cfcfcf" text-anchor="middle">DeltaE 2000</text>
<line x1="78.5" y1="136.5" x2="78.5" y2="499" stroke="#8c8c8c" stroke-width="1"/>
<line x1="117.5" y1="136.5" x2="117.5" y2="499" stroke="#8c8c8c" stroke-width="1"/>
<line x1="156.5" y1="136.5" x2="156.5" y2="499" stroke="#8c8c8c" stroke-width="1"/>
<line x1="195.5" y1="136.5" x2="195.5" y2="499" stroke="#8c8c8c" stroke-width="1"/>
<line x1="234.5" y1="136.5" x2="234.5" y2="499" stroke="#8c8c8c" stroke-width="1"/>
<line x1="273.5" y1="136.5" x2="273.5" y2="499" stroke="#8c8c8c" stroke-width="1"/>
<line x1="312.5" y1="136.5" x2="312.5" y2="499" stroke="#8c8c8c" stroke-width="1"/>
<line x1="39" y1="136.5" x2="331.5" y2="136.5" stroke="#9a9a9a" stroke-width="1.4"/>
<line x1="331.5" y1="136.5" x2="331.5" y2="499" stroke="#9a9a9a" stroke-width="1.4"/>
<line x1="39" y1="499" x2="331.5" y2="499" stroke="#9a9a9a" stroke-width="1.6"/>
<line x1="39" y1="136.5" x2="39" y2="505" stroke="#9a9a9a" stroke-width="1.6"/>
<line x1="33" y1="136.5" x2="39" y2="136.5" stroke="#e0e0e0" stroke-width="2"/>
<line x1="33" y1="188.28571428571428" x2="39" y2="188.28571428571428" stroke="#e0e0e0" stroke-width="2"/>
<line x1="33" y1="240.07142857142856" x2="39" y2="240.07142857142856" stroke="#e0e0e0" stroke-width="2"/>
<line x1="33" y1="291.8571428571429" x2="39" y2="291.8571428571429" stroke="#e0e0e0" stroke-width="2"/>
<line x1="33" y1="343.6428571428571" x2="39" y2="343.6428571428571" stroke="#e0e0e0" stroke-width="2"/>
<line x1="33" y1="395.42857142857144" x2="39" y2="395.42857142857144" stroke="#e0e0e0" stroke-width="2"/>
<line x1="33" y1="447.2142857142857" x2="39" y2="447.2142857142857" stroke="#e0e0e0" stroke-width="2"/>
<line x1="33" y1="499.0" x2="39" y2="499.0" stroke="#e0e0e0" stroke-width="2"/>
<text x="37" y="167.59285714285713" font-size="13" fill="#d2d2d2" text-anchor="end">100%</text>
<text x="37" y="219.3785714285714" font-size="13" fill="#d2d2d2" text-anchor="end">80%</text>
<text x="37" y="271.1642857142857" font-size="13" fill="#d2d2d2" text-anchor="end">60%</text>
<text x="37" y="322.95000000000005" font-size="13" fill="#d2d2d2" text-anchor="end">40%</text>
<text x="37" y="374.73571428571427" font-size="13" fill="#d2d2d2" text-anchor="end">20%</text>
<text x="37" y="426.5214285714286" font-size="13" fill="#d2d2d2" text-anchor="end">100</text>
<text x="37" y="478.3071428571429" font-size="13" fill="#d2d2d2" text-anchor="end">0</text>
<line x1="39.0" y1="499" x2="39.0" y2="504" stroke="#e0e0e0" stroke-width="2"/>
<text x="39.0" y="519" font-size="12.5" fill="#d2d2d2" text-anchor="middle">0</text>
<line x1="78.0" y1="499" x2="78.0" y2="504" stroke="#e0e0e0" stroke-width="2"/>
<text x="78.0" y="519" font-size="12.5" fill="#d2d2d2" text-anchor="middle">2</text>
<line x1="117.0" y1="499" x2="117.0" y2="504" stroke="#e0e0e0" stroke-width="2"/>
<text x="117.0" y="519" font-size="12.5" fill="#d2d2d2" text-anchor="middle">4</text>
<line x1="156.0" y1="499" x2="156.0" y2="504" stroke="#e0e0e0" stroke-width="2"/>
<text x="156.0" y="519" font-size="12.5" fill="#d2d2d2" text-anchor="middle">6</text>
<line x1="195.0" y1="499" x2="195.0" y2="504" stroke="#e0e0e0" stroke-width="2"/>
<text x="195.0" y="519" font-size="12.5" fill="#d2d2d2" text-anchor="middle">8</text>
<line x1="234.0" y1="499" x2="234.0" y2="504" stroke="#e0e0e0" stroke-width="2"/>
<text x="234.0" y="519" font-size="12.5" fill="#d2d2d2" text-anchor="middle">10</text>
<line x1="273.0" y1="499" x2="273.0" y2="504" stroke="#e0e0e0" stroke-width="2"/>
<text x="273.0" y="519" font-size="12.5" fill="#d2d2d2" text-anchor="middle">12</text>
<line x1="312.0" y1="499" x2="312.0" y2="504" stroke="#e0e0e0" stroke-width="2"/>
<text x="312.0" y="519" font-size="12.5" fill="#d2d2d2" text-anchor="middle">14</text>
<rect x="39.8" y="141.8" width="82.3" height="5.4" fill="url(#g2)" stroke="#000" stroke-width="1.25"/>
<rect x="39.8" y="148.1" width="28.2" height="5.4" fill="url(#g3)" stroke="#000" stroke-width="1.25"/>
<rect x="39.8" y="154.4" width="42.2" height="5.4" fill="url(#g4)" stroke="#000" stroke-width="1.25"/>
<rect x="39.8" y="160.7" width="64.6" height="5.4" fill="url(#g5)" stroke="#000" stroke-width="1.25"/>
<rect x="39.8" y="167.0" width="79.6" height="5.4" fill="url(#g6)" stroke="#000" stroke-width="1.25"/>
<rect x="39.8" y="173.3" width="74.3" height="5.4" fill="url(#g7)" stroke="#000" stroke-width="1.25"/>
<rect x="39.8" y="193.6" width="69.4" height="5.4" fill="url(#g8)" stroke="#000" stroke-width="1.25"/>
<rect x="39.8" y="199.9" width="25.2" height="5.4" fill="url(#g9)" stroke="#000" stroke-width="1.25"/>
<rect x="39.8" y="206.2" width="34.4" height="5.4" fill="url(#g10)" stroke="#000" stroke-width="1.25"/>
<rect x="39.8" y="212.5" width="70.3" height="5.4" fill="url(#g11)" stroke="#000" stroke-width="1.25"/>
<rect x="39.8" y="218.8" width="71.3" height="5.4" fill="url(#g12)" stroke="#000" stroke-width="1.25"/>
<rect x="39.8" y="225.1" width="82.3" height="5.4" fill="url(#g13)" stroke="#000" stroke-width="1.25"/>
<rect x="39.8" y="245.4" width="69.4" height="5.4" fill="url(#g14)" stroke="#000" stroke-width="1.25"/>
<rect x="39.8" y="251.7" width="27.0" height="5.4" fill="url(#g15)" stroke="#000" stroke-width="1.25"/>
<rect x="39.8" y="258.0" width="42.0" height="5.4" fill="url(#g16)" stroke="#000" stroke-width="1.25"/>
<rect x="39.8" y="264.3" width="79.3" height="5.4" fill="url(#g17)" stroke="#000" stroke-width="1.25"/>
<rect x="39.8" y="270.6" width="62.3" height="5.4" fill="url(#g18)" stroke="#000" stroke-width="1.25"/>
<rect x="39.8" y="276.9" width="89.4" height="5.4" fill="url(#g19)" stroke="#000" stroke-width="1.25"/>
<rect x="39.8" y="297.2" width="71.5" height="5.4" fill="url(#g20)" stroke="#000" stroke-width="1.25"/>
<rect x="39.8" y="303.5" width="35.8" height="5.4" fill="url(#g21)" stroke="#000" stroke-width="1.25"/>
<rect x="39.8" y="309.8" width="56.1" height="5.4" fill="url(#g22)" stroke="#000" stroke-width="1.25"/>
<rect x="39.8" y="316.1" width="94.5" height="5.4" fill="url(#g23)" stroke="#000" stroke-width="1.25"/>
<rect x="39.8" y="322.4" width="66.2" height="5.4" fill="url(#g24)" stroke="#000" stroke-width="1.25"/>
<rect x="39.8" y="328.7" width="101.1" height="5.4" fill="url(#g25)" stroke="#000" stroke-width="1.25"/>
<rect x="39.8" y="348.9" width="97.5" height="5.4" fill="url(#g26)" stroke="#000" stroke-width="1.25"/>
<rect x="39.8" y="355.2" width="60.2" height="5.4" fill="url(#g27)" stroke="#000" stroke-width="1.25"/>
<rect x="39.8" y="361.5" width="122.4" height="5.4" fill="url(#g28)" stroke="#000" stroke-width="1.25"/>
<rect x="39.8" y="367.8" width="128.2" height="5.4" fill="url(#g29)" stroke="#000" stroke-width="1.25"/>
<rect x="39.8" y="374.1" width="117.1" height="5.4" fill="url(#g30)" stroke="#000" stroke-width="1.25"/>
<rect x="39.8" y="380.4" width="131.6" height="5.4" fill="url(#g31)" stroke="#000" stroke-width="1.25"/>
<rect x="39.8" y="439.3" width="234.3" height="5.4" fill="url(#g32)" stroke="#000" stroke-width="1.1"/>
<rect x="39.8" y="490.2" width="10.500000000000004" height="5.4" fill="#161616" stroke="#000" stroke-width="1.1"/>
<line x1="78.5" y1="136.5" x2="78.5" y2="499" stroke="#8c8c8c" stroke-width="1" opacity="0.12"/>
<line x1="117.5" y1="136.5" x2="117.5" y2="499" stroke="#8c8c8c" stroke-width="1" opacity="0.12"/>
<line x1="156.5" y1="136.5" x2="156.5" y2="499" stroke="#8c8c8c" stroke-width="1" opacity="0.12"/>
<line x1="195.5" y1="136.5" x2="195.5" y2="499" stroke="#8c8c8c" stroke-width="1" opacity="0.12"/>
<line x1="234.5" y1="136.5" x2="234.5" y2="499" stroke="#8c8c8c" stroke-width="1" opacity="0.12"/>
<line x1="273.5" y1="136.5" x2="273.5" y2="499" stroke="#8c8c8c" stroke-width="1" opacity="0.12"/>
<rect x="381.5" y="85.5" width="135.0" height="265.5" fill="#262626"/>
<text x="436.5" y="80.8" font-size="13" fill="#cfcfcf" text-anchor="middle">Delta L</text>
<line x1="381.5" y1="87.4" x2="516.5" y2="87.4" stroke="#8c8c8c" stroke-width="1"/>
<line x1="376.5" y1="87.4" x2="381.5" y2="87.4" stroke="#e0e0e0" stroke-width="2"/>
<text x="375.0" y="91.80000000000001" font-size="12.5" fill="#d2d2d2" text-anchor="end">15</text>
<line x1="381.5" y1="130.6" x2="516.5" y2="130.6" stroke="#8c8c8c" stroke-width="1"/>
<line x1="376.5" y1="130.6" x2="381.5" y2="130.6" stroke="#e0e0e0" stroke-width="2"/>
<text x="375.0" y="135.0" font-size="12.5" fill="#d2d2d2" text-anchor="end">10</text>
<line x1="381.5" y1="175.0" x2="516.5" y2="175.0" stroke="#8c8c8c" stroke-width="1"/>
<line x1="376.5" y1="175.0" x2="381.5" y2="175.0" stroke="#e0e0e0" stroke-width="2"/>
<text x="375.0" y="179.4" font-size="12.5" fill="#d2d2d2" text-anchor="end">5</text>
<line x1="381.5" y1="219.5" x2="516.5" y2="219.5" stroke="#8c8c8c" stroke-width="1"/>
<line x1="376.5" y1="219.5" x2="381.5" y2="219.5" stroke="#e0e0e0" stroke-width="2"/>
<text x="375.0" y="223.9" font-size="12.5" fill="#d2d2d2" text-anchor="end">0</text>
<line x1="381.5" y1="263.2" x2="516.5" y2="263.2" stroke="#8c8c8c" stroke-width="1"/>
<line x1="376.5" y1="263.2" x2="381.5" y2="263.2" stroke="#e0e0e0" stroke-width="2"/>
<text x="375.0" y="267.59999999999997" font-size="12.5" fill="#d2d2d2" text-anchor="end">-5</text>
<line x1="381.5" y1="307.3" x2="516.5" y2="307.3" stroke="#8c8c8c" stroke-width="1"/>
<line x1="376.5" y1="307.3" x2="381.5" y2="307.3" stroke="#e0e0e0" stroke-width="2"/>
<text x="375.0" y="311.7" font-size="12.5" fill="#d2d2d2" text-anchor="end">-10</text>
<line x1="381.5" y1="350.7" x2="516.5" y2="350.7" stroke="#8c8c8c" stroke-width="1"/>
<line x1="376.5" y1="350.7" x2="381.5" y2="350.7" stroke="#e0e0e0" stroke-width="2"/>
<text x="375.0" y="355.09999999999997" font-size="12.5" fill="#d2d2d2" text-anchor="end">-15</text>
<line x1="381.5" y1="85.8" x2="516.5" y2="85.8" stroke="#9a9a9a" stroke-width="1.2"/>
<line x1="381.5" y1="85.5" x2="381.5" y2="357.5" stroke="#9a9a9a" stroke-width="1.4"/>
<line x1="516.5" y1="85.5" x2="516.5" y2="357.5" stroke="#9a9a9a" stroke-width="1.4"/>
<line x1="381.5" y1="351.5" x2="516.5" y2="351.5" stroke="#9a9a9a" stroke-width="1.6"/>
<text x="449" y="366" font-size="12.5" fill="#d2d2d2" text-anchor="middle">100%</text>
<rect x="395.5" y="219.5" width="107.5" height="4.840000000000001" fill="url(#g33)" stroke="#000" stroke-width="1"/>
<rect x="566.5" y="85.5" width="135.0" height="265.5" fill="#262626"/>
<text x="621.5" y="80.8" font-size="13" fill="#cfcfcf" text-anchor="middle">Delta C</text>
<line x1="566.5" y1="87.4" x2="701.5" y2="87.4" stroke="#8c8c8c" stroke-width="1"/>
<line x1="561.5" y1="87.4" x2="566.5" y2="87.4" stroke="#e0e0e0" stroke-width="2"/>
<text x="560.0" y="91.80000000000001" font-size="12.5" fill="#d2d2d2" text-anchor="end">15</text>
<line x1="566.5" y1="130.6" x2="701.5" y2="130.6" stroke="#8c8c8c" stroke-width="1"/>
<line x1="561.5" y1="130.6" x2="566.5" y2="130.6" stroke="#e0e0e0" stroke-width="2"/>
<text x="560.0" y="135.0" font-size="12.5" fill="#d2d2d2" text-anchor="end">10</text>
<line x1="566.5" y1="175.0" x2="701.5" y2="175.0" stroke="#8c8c8c" stroke-width="1"/>
<line x1="561.5" y1="175.0" x2="566.5" y2="175.0" stroke="#e0e0e0" stroke-width="2"/>
<text x="560.0" y="179.4" font-size="12.5" fill="#d2d2d2" text-anchor="end">5</text>
<line x1="566.5" y1="219.5" x2="701.5" y2="219.5" stroke="#8c8c8c" stroke-width="1"/>
<line x1="561.5" y1="219.5" x2="566.5" y2="219.5" stroke="#e0e0e0" stroke-width="2"/>
<text x="560.0" y="223.9" font-size="12.5" fill="#d2d2d2" text-anchor="end">0</text>
<line x1="566.5" y1="263.2" x2="701.5" y2="263.2" stroke="#8c8c8c" stroke-width="1"/>
<line x1="561.5" y1="263.2" x2="566.5" y2="263.2" stroke="#e0e0e0" stroke-width="2"/>
<text x="560.0" y="267.59999999999997" font-size="12.5" fill="#d2d2d2" text-anchor="end">-5</text>
<line x1="566.5" y1="307.3" x2="701.5" y2="307.3" stroke="#8c8c8c" stroke-width="1"/>
<line x1="561.5" y1="307.3" x2="566.5" y2="307.3" stroke="#e0e0e0" stroke-width="2"/>
<text x="560.0" y="311.7" font-size="12.5" fill="#d2d2d2" text-anchor="end">-10</text>
<line x1="566.5" y1="350.7" x2="701.5" y2="350.7" stroke="#8c8c8c" stroke-width="1"/>
<line x1="561.5" y1="350.7" x2="566.5" y2="350.7" stroke="#e0e0e0" stroke-width="2"/>
<text x="560.0" y="355.09999999999997" font-size="12.5" fill="#d2d2d2" text-anchor="end">-15</text>
<line x1="566.5" y1="85.8" x2="701.5" y2="85.8" stroke="#9a9a9a" stroke-width="1.2"/>
<line x1="566.5" y1="85.5" x2="566.5" y2="357.5" stroke="#9a9a9a" stroke-width="1.4"/>
<line x1="701.5" y1="85.5" x2="701.5" y2="357.5" stroke="#9a9a9a" stroke-width="1.4"/>
<line x1="566.5" y1="351.5" x2="701.5" y2="351.5" stroke="#9a9a9a" stroke-width="1.6"/>
<text x="634" y="366" font-size="12.5" fill="#d2d2d2" text-anchor="middle">100%</text>
<rect x="580.5" y="182.1" width="107.5" height="37.400000000000006" fill="url(#g34)" stroke="#000" stroke-width="1"/>
<rect x="751.5" y="85.5" width="136.0" height="265.5" fill="#262626"/>
<text x="807.0" y="80.8" font-size="13" fill="#cfcfcf" text-anchor="middle">Delta H</text>
<line x1="751.5" y1="87.4" x2="887.5" y2="87.4" stroke="#8c8c8c" stroke-width="1"/>
<line x1="746.5" y1="87.4" x2="751.5" y2="87.4" stroke="#e0e0e0" stroke-width="2"/>
<text x="745.0" y="91.80000000000001" font-size="12.5" fill="#d2d2d2" text-anchor="end">15</text>
<line x1="751.5" y1="130.6" x2="887.5" y2="130.6" stroke="#8c8c8c" stroke-width="1"/>
<line x1="746.5" y1="130.6" x2="751.5" y2="130.6" stroke="#e0e0e0" stroke-width="2"/>
<text x="745.0" y="135.0" font-size="12.5" fill="#d2d2d2" text-anchor="end">10</text>
<line x1="751.5" y1="175.0" x2="887.5" y2="175.0" stroke="#8c8c8c" stroke-width="1"/>
<line x1="746.5" y1="175.0" x2="751.5" y2="175.0" stroke="#e0e0e0" stroke-width="2"/>
<text x="745.0" y="179.4" font-size="12.5" fill="#d2d2d2" text-anchor="end">5</text>
<line x1="751.5" y1="219.5" x2="887.5" y2="219.5" stroke="#8c8c8c" stroke-width="1"/>
<line x1="746.5" y1="219.5" x2="751.5" y2="219.5" stroke="#e0e0e0" stroke-width="2"/>
<text x="745.0" y="223.9" font-size="12.5" fill="#d2d2d2" text-anchor="end">0</text>
<line x1="751.5" y1="263.2" x2="887.5" y2="263.2" stroke="#8c8c8c" stroke-width="1"/>
<line x1="746.5" y1="263.2" x2="751.5" y2="263.2" stroke="#e0e0e0" stroke-width="2"/>
<text x="745.0" y="267.59999999999997" font-size="12.5" fill="#d2d2d2" text-anchor="end">-5</text>
<line x1="751.5" y1="307.3" x2="887.5" y2="307.3" stroke="#8c8c8c" stroke-width="1"/>
<line x1="746.5" y1="307.3" x2="751.5" y2="307.3" stroke="#e0e0e0" stroke-width="2"/>
<text x="745.0" y="311.7" font-size="12.5" fill="#d2d2d2" text-anchor="end">-10</text>
<line x1="751.5" y1="350.7" x2="887.5" y2="350.7" stroke="#8c8c8c" stroke-width="1"/>
<line x1="746.5" y1="350.7" x2="751.5" y2="350.7" stroke="#e0e0e0" stroke-width="2"/>
<text x="745.0" y="355.09999999999997" font-size="12.5" fill="#d2d2d2" text-anchor="end">-15</text>
<line x1="751.5" y1="85.8" x2="887.5" y2="85.8" stroke="#9a9a9a" stroke-width="1.2"/>
<line x1="751.5" y1="85.5" x2="751.5" y2="357.5" stroke="#9a9a9a" stroke-width="1.4"/>
<line x1="887.5" y1="85.5" x2="887.5" y2="357.5" stroke="#9a9a9a" stroke-width="1.4"/>
<line x1="751.5" y1="351.5" x2="887.5" y2="351.5" stroke="#9a9a9a" stroke-width="1.6"/>
<text x="819" y="366" font-size="12.5" fill="#d2d2d2" text-anchor="middle">100%</text>
<rect x="765.5" y="145.57999999999998" width="107.5" height="73.92000000000002" fill="url(#g35)" stroke="#000" stroke-width="1"/>
<rect x="350" y="375.5" width="555" height="152.5" fill="#000"/>
<rect x="369.5" y="382.5" width="93" height="62" fill="#b0c296"/>
<rect x="369.5" y="444" width="93" height="62.5" fill="#c0c09f"/>
<rect x="369.6" y="382.6" width="92.8" height="123.8" fill="none" stroke="#f4f4f4" stroke-width="1.2"/>
<text x="416" y="520.5" font-size="11.5" fill="#fff" text-anchor="middle" stroke="#fff" stroke-width="0.35">20%</text>
<rect x="478.5" y="382.5" width="93" height="62" fill="#aec37a"/>
<rect x="478.5" y="444" width="93" height="62.5" fill="#c0c083"/>
<rect x="478.6" y="382.6" width="92.8" height="123.8" fill="none" stroke="#f4f4f4" stroke-width="1.2"/>
<text x="525" y="520.5" font-size="11.5" fill="#fff" text-anchor="middle" stroke="#fff" stroke-width="0.35">40%</text>
<rect x="586.5" y="382.5" width="93" height="62" fill="#afc255"/>
<rect x="586.5" y="444" width="93" height="62.5" fill="#c1c060"/>
<rect x="586.6" y="382.6" width="92.8" height="123.8" fill="none" stroke="#f4f4f4" stroke-width="1.2"/>
<text x="633" y="520.5" font-size="11.5" fill="#fff" text-anchor="middle" stroke="#fff" stroke-width="0.35">60%</text>
<rect x="695.5" y="382.5" width="92.4" height="62" fill="#b1c21c"/>
<rect x="695.5" y="444" width="92.4" height="62.5" fill="#c2c030"/>
<rect x="695.6" y="382.6" width="92.2" height="123.8" fill="none" stroke="#f4f4f4" stroke-width="1.2"/>
<text x="742" y="520.5" font-size="11.5" fill="#fff" text-anchor="middle" stroke="#fff" stroke-width="0.35">80%</text>
<rect x="804.5" y="382.5" width="92.2" height="62" fill="#b8c800"/>
<rect x="804.5" y="444" width="92.2" height="62.5" fill="#c8c416"/>
<rect x="804.6" y="382.6" width="92.0" height="123.8" fill="none" stroke="#f4f4f4" stroke-width="1.2"/>
<text x="851" y="520.5" font-size="11.5" fill="#fff" text-anchor="middle" stroke="#fff" stroke-width="0.35">100%</text>
<text transform="translate(361.8,409.5) rotate(-90)" font-size="11" font-weight="700" fill="#fff" text-anchor="middle">Actual</text>
<text transform="translate(361.8,478.5) rotate(-90)" font-size="11" font-weight="700" fill="#fff" text-anchor="middle">Target</text>
<text x="46" y="570.4" font-size="27.3" fill="#f2f2f2" textLength="217" lengthAdjust="spacingAndGlyphs">Avg dE2000: 4,07</text>
<text x="34" y="607.8" font-size="27.3" fill="#f2f2f2" textLength="242.5" lengthAdjust="spacingAndGlyphs">Max dE2000: 12,05</text>
<text x="12.5" y="653.3" font-size="28.5" fill="#f2f2f2" textLength="204.5" lengthAdjust="spacingAndGlyphs">Current Reading</text>
<text x="12.5" y="686.5" font-size="23.3" fill="#f2f2f2" textLength="82" lengthAdjust="spacingAndGlyphs">x: 0,421</text>
<text x="159" y="686.5" font-size="23.3" fill="#f2f2f2" textLength="95.5" lengthAdjust="spacingAndGlyphs">y: 0,5549</text>
<text x="12.5" y="725.5" font-size="23.3" fill="#f2f2f2" textLength="89.5" lengthAdjust="spacingAndGlyphs">fL: 46,65</text>
<text x="12.5" y="757.5" font-size="23.3" fill="#f2f2f2" textLength="148" lengthAdjust="spacingAndGlyphs">cd/m²: 159,82</text>
<rect x="334" y="577.5" width="233.5" height="169.5" fill="#262626"/>
<text x="436" y="572" font-size="13" fill="#cfcfcf" text-anchor="middle">RGB Balance</text>
<line x1="334" y1="578.5" x2="567.5" y2="578.5" stroke="#8c8c8c" stroke-width="1"/>
<line x1="328" y1="578.5" x2="334" y2="578.5" stroke="#e0e0e0" stroke-width="1.6"/>
<text x="328" y="583.1" font-size="13" fill="#d2d2d2" text-anchor="end">110</text>
<line x1="334" y1="620.5" x2="567.5" y2="620.5" stroke="#8c8c8c" stroke-width="1"/>
<line x1="328" y1="620.5" x2="334" y2="620.5" stroke="#e0e0e0" stroke-width="1.6"/>
<text x="328" y="625.1" font-size="13" fill="#d2d2d2" text-anchor="end">105</text>
<line x1="334" y1="662.5" x2="567.5" y2="662.5" stroke="#8c8c8c" stroke-width="1"/>
<line x1="328" y1="662.5" x2="334" y2="662.5" stroke="#e0e0e0" stroke-width="1.6"/>
<text x="328" y="667.1" font-size="13" fill="#d2d2d2" text-anchor="end">100</text>
<line x1="334" y1="705.5" x2="567.5" y2="705.5" stroke="#8c8c8c" stroke-width="1"/>
<line x1="328" y1="705.5" x2="334" y2="705.5" stroke="#e0e0e0" stroke-width="1.6"/>
<text x="328" y="710.1" font-size="13" fill="#d2d2d2" text-anchor="end">95</text>
<line x1="334" y1="747.5" x2="567.5" y2="747.5" stroke="#8c8c8c" stroke-width="1"/>
<line x1="328" y1="747.5" x2="334" y2="747.5" stroke="#e0e0e0" stroke-width="1.6"/>
<text x="328" y="752.1" font-size="13" fill="#d2d2d2" text-anchor="end">90</text>
<line x1="334" y1="577.5" x2="567.5" y2="577.5" stroke="#9a9a9a" stroke-width="1.4"/>
<line x1="334" y1="577.5" x2="334" y2="753" stroke="#9a9a9a" stroke-width="1.4"/>
<line x1="567.5" y1="577.5" x2="567.5" y2="753" stroke="#9a9a9a" stroke-width="1.4"/>
<line x1="334" y1="747" x2="567.5" y2="747" stroke="#9a9a9a" stroke-width="1.8"/>
<text x="450.5" y="762" font-size="12.5" fill="#d2d2d2" text-anchor="middle">100%</text>
<rect x="357" y="704.5" width="60.5" height="42.0" fill="url(#g36)" stroke="#000" stroke-width="1"/>
<rect x="418.5" y="657.5" width="61.5" height="89.0" fill="url(#g37)" stroke="#000" stroke-width="1"/>
<rect x="481.5" y="689.5" width="61" height="57.0" fill="url(#g38)" stroke="#000" stroke-width="1"/>
<rect x="587" y="548" width="683.5" height="221.5" fill="#000"/>
<rect x="588" y="549" width="681.5" height="26" fill="url(#g39)"/>
<text x="820" y="567" font-size="14" fill="#f4f4f4" text-anchor="middle" textLength="37.5" lengthAdjust="spacingAndGlyphs" stroke="#f4f4f4" stroke-width="0.45" class="dv">20%</text>
<text x="920" y="567" font-size="14" fill="#f4f4f4" text-anchor="middle" textLength="37.5" lengthAdjust="spacingAndGlyphs" stroke="#f4f4f4" stroke-width="0.45" class="dv">40%</text>
<text x="1020" y="567" font-size="14" fill="#f4f4f4" text-anchor="middle" textLength="37.5" lengthAdjust="spacingAndGlyphs" stroke="#f4f4f4" stroke-width="0.45" class="dv">60%</text>
<text x="1120" y="567" font-size="14" fill="#f4f4f4" text-anchor="middle" textLength="37.5" lengthAdjust="spacingAndGlyphs" stroke="#f4f4f4" stroke-width="0.45" class="dv">80%</text>
<text x="1220" y="567" font-size="14" fill="#f4f4f4" text-anchor="middle" textLength="48.5" lengthAdjust="spacingAndGlyphs" stroke="#f4f4f4" stroke-width="0.45" class="dv">100%</text>
<rect x="588" y="575.0" width="681.5" height="24.2" fill="#414141"/>
<text x="605" y="592.2" font-size="14.5" fill="#f6f6f6" font-weight="700" textLength="80" lengthAdjust="spacingAndGlyphs" class="dv">x: CIE31</text>
<text x="776.5" y="592.2" font-size="14.5" fill="#f0f0f0" textLength="64" lengthAdjust="spacingAndGlyphs" class="dv">0,3308</text>
<text x="876.5" y="592.2" font-size="14.5" fill="#f0f0f0" textLength="64" lengthAdjust="spacingAndGlyphs" class="dv">0,3530</text>
<text x="976.5" y="592.2" font-size="14.5" fill="#f0f0f0" textLength="64" lengthAdjust="spacingAndGlyphs" class="dv">0,3761</text>
<text x="1076.5" y="592.2" font-size="14.5" fill="#f0f0f0" textLength="64" lengthAdjust="spacingAndGlyphs" class="dv">0,3993</text>
<text x="1176.5" y="592.2" font-size="14.5" fill="#f0f0f0" textLength="64" lengthAdjust="spacingAndGlyphs" class="dv">0,4210</text>
<rect x="588" y="599.2" width="681.5" height="24.2" fill="#808080"/>
<text x="605" y="616.4" font-size="14.5" fill="#f6f6f6" font-weight="700" textLength="80" lengthAdjust="spacingAndGlyphs" class="dv">y: CIE31</text>
<text x="776.5" y="616.4" font-size="14.5" fill="#f0f0f0" textLength="64" lengthAdjust="spacingAndGlyphs" class="dv">0,3886</text>
<text x="876.5" y="616.4" font-size="14.5" fill="#f0f0f0" textLength="64" lengthAdjust="spacingAndGlyphs" class="dv">0,4295</text>
<text x="976.5" y="616.4" font-size="14.5" fill="#f0f0f0" textLength="64" lengthAdjust="spacingAndGlyphs" class="dv">0,4721</text>
<text x="1076.5" y="616.4" font-size="14.5" fill="#f0f0f0" textLength="64" lengthAdjust="spacingAndGlyphs" class="dv">0,5148</text>
<text x="1176.5" y="616.4" font-size="14.5" fill="#f0f0f0" textLength="64" lengthAdjust="spacingAndGlyphs" class="dv">0,5549</text>
<rect x="588" y="623.4" width="681.5" height="24.2" fill="#414141"/>
<text x="605" y="640.6" font-size="14.5" fill="#f6f6f6" font-weight="700" textLength="11" lengthAdjust="spacingAndGlyphs" class="dv">Y</text>
<text x="776.5" y="640.6" font-size="14.5" fill="#f0f0f0" textLength="86.5" lengthAdjust="spacingAndGlyphs" class="dv">167,9111</text>
<text x="876.5" y="640.6" font-size="14.5" fill="#f0f0f0" textLength="86.5" lengthAdjust="spacingAndGlyphs" class="dv">165,3147</text>
<text x="976.5" y="640.6" font-size="14.5" fill="#f0f0f0" textLength="86.5" lengthAdjust="spacingAndGlyphs" class="dv">163,1678</text>
<text x="1076.5" y="640.6" font-size="14.5" fill="#f0f0f0" textLength="86.5" lengthAdjust="spacingAndGlyphs" class="dv">161,4116</text>
<text x="1176.5" y="640.6" font-size="14.5" fill="#f0f0f0" textLength="86.5" lengthAdjust="spacingAndGlyphs" class="dv">159,8215</text>
<rect x="588" y="647.6" width="681.5" height="24.2" fill="#808080"/>
<text x="605" y="664.8" font-size="14.5" fill="#f6f6f6" font-weight="700" textLength="146" lengthAdjust="spacingAndGlyphs" class="dv">Target x:CIE31</text>
<text x="776.5" y="664.8" font-size="14.5" fill="#f0f0f0" textLength="64" lengthAdjust="spacingAndGlyphs" class="dv">0,3384</text>
<text x="876.5" y="664.8" font-size="14.5" fill="#f0f0f0" textLength="64" lengthAdjust="spacingAndGlyphs" class="dv">0,3619</text>
<text x="976.5" y="664.8" font-size="14.5" fill="#f0f0f0" textLength="64" lengthAdjust="spacingAndGlyphs" class="dv">0,3869</text>
<text x="1076.5" y="664.8" font-size="14.5" fill="#f0f0f0" textLength="64" lengthAdjust="spacingAndGlyphs" class="dv">0,4127</text>
<text x="1176.5" y="664.8" font-size="14.5" fill="#f0f0f0" textLength="64" lengthAdjust="spacingAndGlyphs" class="dv">0,4378</text>
<rect x="588" y="671.8" width="681.5" height="24.2" fill="#414141"/>
<text x="605" y="689.0" font-size="14.5" fill="#f6f6f6" font-weight="700" textLength="146" lengthAdjust="spacingAndGlyphs" class="dv">Target y:CIE31</text>
<text x="776.5" y="689.0" font-size="14.5" fill="#f0f0f0" textLength="64" lengthAdjust="spacingAndGlyphs" class="dv">0,3714</text>
<text x="876.5" y="689.0" font-size="14.5" fill="#f0f0f0" textLength="64" lengthAdjust="spacingAndGlyphs" class="dv">0,4103</text>
<text x="976.5" y="689.0" font-size="14.5" fill="#f0f0f0" textLength="64" lengthAdjust="spacingAndGlyphs" class="dv">0,4517</text>
<text x="1076.5" y="689.0" font-size="14.5" fill="#f0f0f0" textLength="64" lengthAdjust="spacingAndGlyphs" class="dv">0,4944</text>
<text x="1176.5" y="689.0" font-size="14.5" fill="#f0f0f0" textLength="64" lengthAdjust="spacingAndGlyphs" class="dv">0,5359</text>
<rect x="588" y="696.0" width="681.5" height="24.2" fill="#808080"/>
<text x="605" y="713.2" font-size="14.5" fill="#f6f6f6" font-weight="700" textLength="85" lengthAdjust="spacingAndGlyphs" class="dv">Target Y</text>
<text x="776.5" y="713.2" font-size="14.5" fill="#f0f0f0" textLength="86.5" lengthAdjust="spacingAndGlyphs" class="dv">173,2822</text>
<text x="876.5" y="713.2" font-size="14.5" fill="#f0f0f0" textLength="86.5" lengthAdjust="spacingAndGlyphs" class="dv">170,1801</text>
<text x="976.5" y="713.2" font-size="14.5" fill="#f0f0f0" textLength="86.5" lengthAdjust="spacingAndGlyphs" class="dv">167,5556</text>
<text x="1076.5" y="713.2" font-size="14.5" fill="#f0f0f0" textLength="86.5" lengthAdjust="spacingAndGlyphs" class="dv">165,3704</text>
<text x="1176.5" y="713.2" font-size="14.5" fill="#f0f0f0" textLength="86.5" lengthAdjust="spacingAndGlyphs" class="dv">163,6225</text>
<rect x="588" y="720.2" width="681.5" height="24.2" fill="#414141"/>
<text x="605" y="737.4" font-size="14.5" fill="#f6f6f6" font-weight="700" textLength="84" lengthAdjust="spacingAndGlyphs" class="dv">ΔE 2000</text>
<text x="776.5" y="737.4" font-size="14.5" fill="#f0f0f0" textLength="64" lengthAdjust="spacingAndGlyphs" class="dv">6,8411</text>
<text x="876.5" y="737.4" font-size="14.5" fill="#f0f0f0" textLength="64" lengthAdjust="spacingAndGlyphs" class="dv">5,2564</text>
<text x="976.5" y="737.4" font-size="14.5" fill="#f0f0f0" textLength="64" lengthAdjust="spacingAndGlyphs" class="dv">4,6982</text>
<text x="1076.5" y="737.4" font-size="14.5" fill="#f0f0f0" textLength="64" lengthAdjust="spacingAndGlyphs" class="dv">4,2784</text>
<text x="1176.5" y="737.4" font-size="14.5" fill="#f0f0f0" textLength="64" lengthAdjust="spacingAndGlyphs" class="dv">3,8704</text>
<rect x="588" y="744.4" width="681.5" height="24.2" fill="#808080"/>
<text x="605" y="761.6" font-size="14.5" fill="#f6f6f6" font-weight="700" textLength="66" lengthAdjust="spacingAndGlyphs" class="dv">ΔE ITP</text>
<text x="776.5" y="761.6" font-size="14.5" fill="#f0f0f0" textLength="75" lengthAdjust="spacingAndGlyphs" class="dv">10,5945</text>
<text x="876.5" y="761.6" font-size="14.5" fill="#f0f0f0" textLength="75" lengthAdjust="spacingAndGlyphs" class="dv">11,2249</text>
<text x="976.5" y="761.6" font-size="14.5" fill="#f0f0f0" textLength="75" lengthAdjust="spacingAndGlyphs" class="dv">11,6840</text>
<text x="1076.5" y="761.6" font-size="14.5" fill="#f0f0f0" textLength="75" lengthAdjust="spacingAndGlyphs" class="dv">11,8427</text>
<text x="1176.5" y="761.6" font-size="14.5" fill="#f0f0f0" textLength="75" lengthAdjust="spacingAndGlyphs" class="dv">11,3997</text>
<rect x="0" y="781.5" width="1563" height="59.5" fill="url(#g40)"/>
<rect x="0" y="781.5" width="1563" height="59.5" fill="url(#vig)"/>
<path d="M0 841V786q0-4 4-4H39.5q4 0 4 4V841z" fill="url(#g42)"/>
<circle cx="21.5" cy="791.3" r="7.4" fill="url(#g44)"/><path d="M17.7 792.6h7.6l-3.8-4.6z" fill="#2a2a2a"/>
<rect x="4" y="808" width="35.3" height="30.2" fill="#ffff00" stroke="#c8c800" stroke-width="0.8" rx="3.5"/>
<path d="M50 841V786q0-4 4-4H196q4 0 4 4V841z" fill="url(#g42)"/>
<path d="M50.5 841V786q0-3.5 3.5-3.5H196q3.5 0 3.5 3.5V841" fill="none" stroke="#b4b4b4" stroke-width="1" opacity="0.7"/>
<rect x="55.5" y="787.5" width="139.5" height="35.5" fill="#c0c0a0" stroke="#77774e" stroke-width="0.8" rx="4"/>
<text x="125" y="837.5" font-size="10.5" fill="#2a2a2a" text-anchor="middle">20%</text>
<path d="M202 841V786q0-4 4-4H348q4 0 4 4V841z" fill="url(#g42)"/>
<path d="M202.5 841V786q0-3.5 3.5-3.5H348q3.5 0 3.5 3.5V841" fill="none" stroke="#b4b4b4" stroke-width="1" opacity="0.7"/>
<rect x="207.5" y="787.5" width="139.5" height="35.5" fill="#c0c083" stroke="#77774e" stroke-width="0.8" rx="4"/>
<text x="277" y="837.5" font-size="10.5" fill="#2a2a2a" text-anchor="middle">40%</text>
<path d="M354 841V786q0-4 4-4H500q4 0 4 4V841z" fill="url(#g42)"/>
<path d="M354.5 841V786q0-3.5 3.5-3.5H500q3.5 0 3.5 3.5V841" fill="none" stroke="#b4b4b4" stroke-width="1" opacity="0.7"/>
<rect x="359.5" y="787.5" width="139.5" height="35.5" fill="#c0c064" stroke="#77774e" stroke-width="0.8" rx="4"/>
<text x="429" y="837.5" font-size="10.5" fill="#2a2a2a" text-anchor="middle">60%</text>
<path d="M506 841V786q0-4 4-4H652q4 0 4 4V841z" fill="url(#g42)"/>
<path d="M506.5 841V786q0-3.5 3.5-3.5H652q3.5 0 3.5 3.5V841" fill="none" stroke="#b4b4b4" stroke-width="1" opacity="0.7"/>
<rect x="511.5" y="787.5" width="139.5" height="35.5" fill="#c2c048" stroke="#77774e" stroke-width="0.8" rx="4"/>
<text x="581" y="837.5" font-size="10.5" fill="#2a2a2a" text-anchor="middle">80%</text>
<path d="M658 841V786q0-4 4-4H804q4 0 4 4V841z" fill="url(#g43)"/>
<rect x="663.5" y="787.5" width="139.5" height="35.5" fill="#c4c000" stroke="#8a8a00" stroke-width="0.8" rx="4"/>
<text x="733" y="837.5" font-size="10.5" fill="#fff" text-anchor="middle" font-weight="700">100%</text>
<path d="M1241.5 841V786q0-4 4-4H1285q4 0 4 4V841z" fill="url(#g45)"/>
<line x1="1241.5" y1="800" x2="1289" y2="800" stroke="#555" stroke-width="1"/>
<circle cx="1265.4" cy="790.6" r="7" fill="url(#g44)"/><path d="M1261.5 792.6h7.8l-3.9-4z" fill="#3a3a3a"/>
<rect x="1250.6" y="807.4" width="28.6" height="28.6" fill="url(#g46)" stroke="#2c2c2c" stroke-width="2.4" rx="4.5"/>
<rect x="1258" y="815" width="13.8" height="13.8" fill="url(#g47)"/>
<path d="M1290 811.5V785q0-3 3-3H1335.5V811.5z" fill="url(#g45)"/>
<circle cx="1313.2" cy="796.8" r="10" fill="url(#g48)"/>
<path d="M1336.5 811.5V785q0-3 3-3H1381V811.5z" fill="url(#g45)"/>
<circle cx="1359.2" cy="796.8" r="10" fill="url(#g48)"/>
<path d="M1382 811.5V785q0-3 3-3H1426V811.5z" fill="url(#g45)"/>
<circle cx="1404.5" cy="796.8" r="10" fill="url(#g48)"/>
<path d="M1427 811.5V785q0-3 3-3H1471V811.5z" fill="url(#g45)"/>
<circle cx="1449.5" cy="796.8" r="10" fill="url(#g48)"/>
<path d="M1472 811.5V785q0-3 3-3H1515.5V811.5z" fill="url(#g45)"/>
<circle cx="1494.2" cy="796.8" r="10" fill="url(#g48)"/>
<path d="M1516.5 811.5V785q0-3 3-3H1562V811.5z" fill="url(#g45)"/>
<circle cx="1539.8" cy="796.8" r="10" fill="url(#g48)"/>
<rect x="1308.9" y="792.9" width="8" height="8" fill="#2e2e2e"/>
<path d="M1355.5 790.8v12l10-6z" fill="#1e1e1e"/>
<text x="1404.2" y="801" font-size="11.5" fill="#1e1e1e" text-anchor="middle" font-weight="700">[··]</text>
<text x="1449.2" y="802" font-size="17" fill="#1e1e1e" text-anchor="middle" font-weight="700">∞</text>
<path d="M1489.6 795.2a4.8 4.8 0 0 1 8.6-1.4m0.8 4.6a4.8 4.8 0 0 1-8.6 1.4" fill="none" stroke="#1e1e1e" stroke-width="2.2"/><path d="M1500.3 790.6v5h-5zM1488.3 803v-5h5z" fill="#1e1e1e"/>
<rect x="1290" y="812.5" width="136.5" height="28.5" fill="url(#g45)"/>
<rect x="1427.5" y="812.5" width="135.5" height="28.5" fill="url(#g45)"/>
<circle cx="1321" cy="828.2" r="10" fill="url(#g48)"/><circle cx="1534.5" cy="828.2" r="10" fill="url(#g48)"/>
<path d="M1320.6 823.1l-4.2 4.8 4.2 4.8M1325.6 823.1l-4.2 4.8 4.2 4.8" fill="none" stroke="#2e2e2e" stroke-width="1.5"/>
<path d="M1530.2 823.1l4.2 4.8-4.2 4.8M1535.2 823.1l4.2 4.8-4.2 4.8" fill="none" stroke="#2e2e2e" stroke-width="1.5"/>
<text x="1347.5" y="836" font-size="22" fill="#2c2c2c" textLength="50.5" lengthAdjust="spacingAndGlyphs" stroke="#2c2c2c" stroke-width="0.8">Back</text>
<text x="1454.5" y="836" font-size="22" fill="#2c2c2c" textLength="52" lengthAdjust="spacingAndGlyphs" stroke="#2c2c2c" stroke-width="0.8">Next</text>
</svg>
</body></html>
